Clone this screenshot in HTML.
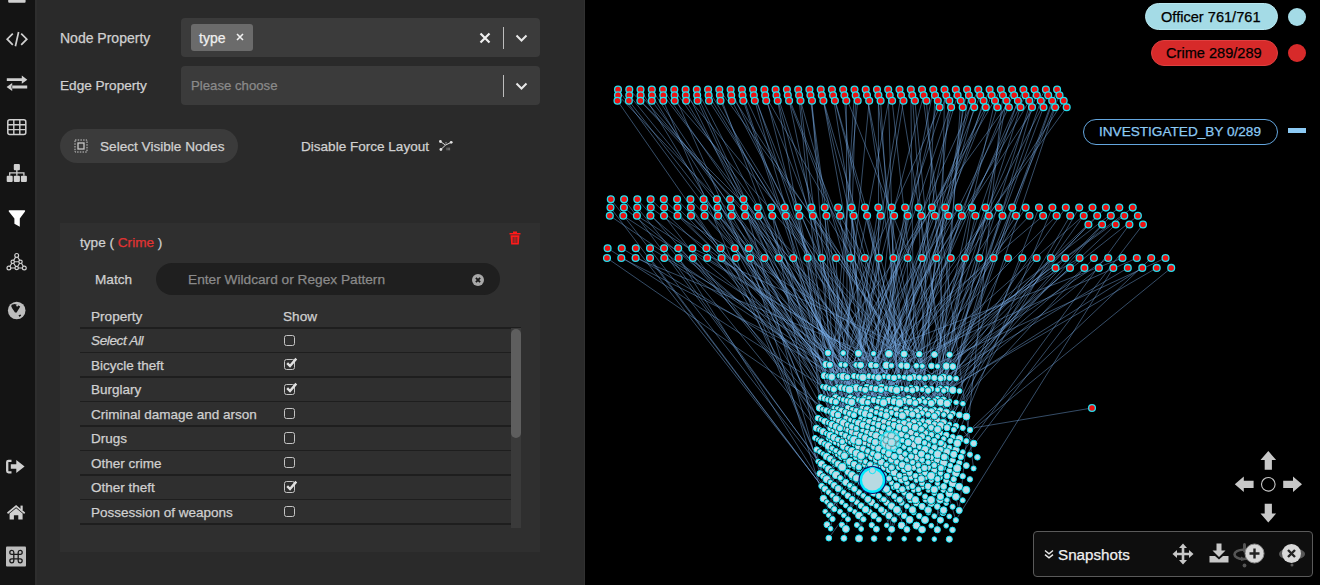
<!DOCTYPE html><html><head><meta charset="utf-8"><style>
*{box-sizing:border-box;margin:0;padding:0}
html,body{width:1320px;height:585px;overflow:hidden;background:#000;font-family:"Liberation Sans",sans-serif}
.a{position:absolute;white-space:nowrap;-webkit-text-stroke:0.25px currentColor}
#side{left:0;top:0;width:35px;height:585px;background:#141414}
#panel{left:35px;top:0;width:550px;height:585px;background:#2a2a2a}
#graph{left:585px;top:0;width:735px;height:585px;background:#000}
.lbl{color:#d0d0d0;font-size:14px}
.sel{background:#3b3b3b;border-radius:4px}
</style></head><body>
<div class="a" id="side"><svg class="a" style="left:0;top:0" width="35" height="585" viewBox="0 0 35 585"><rect x="8.2" y="-2" width="17.4" height="4.8" rx="1" fill="#d0d0d0"/><path d="M12.8 33.6 L7.2 39.2 L12.8 44.8 M21.2 33.6 L26.8 39.2 L21.2 44.8 M18.6 32 L15.4 46.2" stroke="#d0d0d0" stroke-width="1.7" fill="none"/><path d="M6.8 78.3 H22.5 V81.1 H6.8 Z M21.8 75.6 L27.3 79.7 L21.8 83.8 Z M11.5 85.6 H27.2 V88.4 H11.5 Z M12.2 82.9 L6.6 87 L12.2 91.1 Z" fill="#d0d0d0"/><rect x="7.8" y="119.7" width="18" height="14.9" rx="2" stroke="#d0d0d0" stroke-width="1.5" fill="none"/><path d="M13.8 119.7 V134.6 M19.8 119.7 V134.6 M7.8 124.7 H25.8 M7.8 129.6 H25.8" stroke="#d0d0d0" stroke-width="1.4"/><g fill="#d0d0d0"><rect x="13.8" y="164" width="6.1" height="6.2" rx="1"/><rect x="6.7" y="175.7" width="6" height="6.2" rx="1"/><rect x="13.8" y="175.7" width="6.1" height="6.2" rx="1"/><rect x="20.9" y="175.7" width="6" height="6.2" rx="1"/></g><path d="M16.85 170 V175.7 M9.7 175.7 V172.8 H23.9 V175.7" stroke="#d0d0d0" stroke-width="1.3" fill="none"/><path d="M9.2 210.3 H24.6 Q25.6 210.5 25 211.4 L19.8 218.5 V226.7 L14.4 223.8 V218.5 L8.8 211.4 Q8.3 210.5 9.2 210.3 Z" fill="#ffffff"/><path d="M16.7 255.4 L8.9 268 H24.3 Z M12.7 261.8 H20.5 L16.7 268 Z" stroke="#d0d0d0" stroke-width="1.1" fill="none"/><g fill="#141414" stroke="#d0d0d0" stroke-width="1.2"><circle cx="16.7" cy="255.4" r="1.9"/><circle cx="8.9" cy="268" r="1.9"/><circle cx="24.3" cy="268" r="1.9"/><circle cx="12.7" cy="261.8" r="1.7"/><circle cx="20.5" cy="261.8" r="1.7"/><circle cx="16.7" cy="268" r="1.7"/></g><circle cx="16.7" cy="310.5" r="8.8" fill="#bdbdbd"/><path d="M11.6 304.7 L14.7 304 L17.1 304.7 L20.2 306.4 L19.1 308.5 L17.8 310.5 L16.7 312.6 L15 312.6 L13.7 310.5 L12.3 308.5 L11.3 306.4 Z" fill="#141414"/><circle cx="17.2" cy="305.6" r="1" fill="#bdbdbd"/><path d="M18.5 315.3 L20.5 314.6 L21.2 315.6 L19.5 317 Z" fill="#141414"/><path d="M11.5 460.8 H8.5 Q7.2 460.8 7.2 462.1 V471 Q7.2 472.3 8.5 472.3 H11.5" stroke="#d0d0d0" stroke-width="2.3" fill="none"/><path d="M10.8 464.3 H16.3 V460 L24.6 466.5 L16.3 473 V468.8 H10.8 Z" fill="#d0d0d0"/><path d="M16.1 505 L7 512.6 L8 513.9 L16.1 507.3 L24.2 513.9 L25.2 512.6 Z" fill="#d0d0d0"/><path d="M9.6 513.4 L16.1 508.2 L22.6 513.4 V519.4 H18.3 V515.3 H13.9 V519.4 H9.6 Z" fill="#d0d0d0"/><rect x="20.5" y="505.6" width="2.2" height="4.5" fill="#d0d0d0"/><rect x="6" y="546.6" width="20" height="20" rx="1" fill="#bdbdbd"/><g transform="translate(9.2 549.8)"><path d="M4.6 4.6 V2.5 A2 2 0 1 0 2.5 4.6 H11.1 A2 2 0 1 0 9 2.5 V11.1 A2 2 0 1 0 11.1 9 H2.5 A2 2 0 1 0 4.6 11.1 Z" stroke="#1a1a1a" stroke-width="1.3" fill="none"/></g></svg></div>
<div class="a" id="panel"></div><div class="a" style="left:35px;top:0;width:2px;height:585px;background:#2e2e2e"></div><div class="a" style="left:584px;top:0;width:1px;height:585px;background:#313131"></div>
<div class="a" style="left:60px;top:31px;font-size:14px;line-height:14px;color:#d0d0d0;">Node Property</div>
<div class="a" style="left:60px;top:79px;font-size:13.6px;line-height:13.6px;color:#d0d0d0;">Edge Property</div>
<div class="a sel" style="left:181px;top:18px;width:359px;height:39px"></div>
<div class="a" style="left:191px;top:24px;width:62px;height:27px;background:#6b6b6b;border-radius:3px"></div>
<div class="a" style="left:199px;top:31px;font-size:14px;line-height:14px;color:#f0f0f0;">type</div>
<svg class="a" style="left:236px;top:33px" width="8" height="8" viewBox="0 0 8 8"><path d="M1 1 L7 7 M7 1 L1 7" stroke="#f0f0f0" stroke-width="1.6"/></svg>
<svg class="a" style="left:479px;top:32px" width="12" height="12" viewBox="0 0 12 12"><path d="M1.5 1.5 L10.5 10.5 M10.5 1.5 L1.5 10.5" stroke="#f0f0f0" stroke-width="2.2"/></svg>
<div class="a" style="left:503px;top:27px;width:1px;height:22px;background:#bdbdbd"></div>
<svg class="a" style="left:515px;top:34px" width="13" height="8" viewBox="0 0 13 8"><path d="M1.5 1.5 L6.5 6.5 L11.5 1.5" stroke="#e8e8e8" stroke-width="2" fill="none"/></svg>
<div class="a sel" style="left:181px;top:66px;width:359px;height:39px"></div>
<div class="a" style="left:191px;top:79px;font-size:13.2px;line-height:13.2px;color:#8a8a8a;">Please choose</div>
<div class="a" style="left:503px;top:75px;width:1px;height:22px;background:#bdbdbd"></div>
<svg class="a" style="left:515px;top:82px" width="13" height="8" viewBox="0 0 13 8"><path d="M1.5 1.5 L6.5 6.5 L11.5 1.5" stroke="#e8e8e8" stroke-width="2" fill="none"/></svg>
<div class="a" style="left:60px;top:129px;width:178px;height:34px;background:#3b3b3b;border-radius:17px"></div>
<svg class="a" style="left:74px;top:139px" width="14" height="14" viewBox="0 0 14 14"><rect x="1" y="1" width="12" height="12" stroke="#c8c8c8" stroke-width="1" stroke-dasharray="1.5 1.2" fill="none"/><rect x="4" y="4" width="6" height="6" stroke="#c8c8c8" stroke-width="1.3" fill="none"/></svg>
<div class="a" style="left:100px;top:140px;font-size:13.6px;line-height:13.6px;color:#d0d0d0;">Select Visible Nodes</div>
<div class="a" style="left:301px;top:140px;font-size:13.55px;line-height:13.55px;color:#d0d0d0;">Disable Force Layout</div>
<svg class="a" style="left:430px;top:130px" width="30" height="30" viewBox="430 130 30 30"><path d="M445.5 145.1 L440.4 141.5 M445.5 145.1 L451.2 142.3 M445.5 145.1 L440.9 149.5 M446 143.5 V142.3" stroke="#d8d8d8" stroke-width="1" fill="none"/><g fill="#e0e0e0"><circle cx="440.4" cy="141.5" r="1.4"/><circle cx="451.2" cy="142.3" r="1.4"/><circle cx="440.9" cy="149.5" r="1.4"/></g><path d="M447 147.6 V150.3 M448.3 147.6 V150.3 M449.6 147.6 V150.3" stroke="#888" stroke-width="0.8"/></svg>
<div class="a" style="left:60px;top:223px;width:480px;height:329px;background:#2f2f2f"></div>
<div class="a" style="left:80px;top:236px;font-size:13.6px;line-height:14px;color:#d0d0d0">type ( <span style="color:#e03333">Crime</span> )</div>
<svg class="a" style="left:509px;top:231px" width="12" height="14" viewBox="0 0 12 14"><path d="M0.5 2 H11.5 V3.5 H0.5 Z M4 0.5 H8 V2 H4 Z" fill="#ff1a1a"/><path d="M1.5 4.2 H10.5 L9.8 13.5 H2.2 Z" fill="#ff1a1a"/><path d="M4.2 6 V12 M6 6 V12 M7.8 6 V12" stroke="#2f2f2f" stroke-width="0.8"/></svg>
<div class="a" style="left:95px;top:273px;font-size:13.6px;line-height:13.6px;color:#d0d0d0;">Match</div>
<div class="a" style="left:156px;top:263px;width:344px;height:32px;background:#1f1f1f;border-radius:16px"></div>
<div class="a" style="left:188px;top:273px;font-size:13.7px;line-height:13.7px;color:#8a8a8a;">Enter Wildcard or Regex Pattern</div>
<svg class="a" style="left:472px;top:274px" width="12" height="12" viewBox="0 0 12 12"><circle cx="6" cy="6" r="6" fill="#a8a8a8"/><path d="M3.9 3.9 L8.1 8.1 M8.1 3.9 L3.9 8.1" stroke="#1a1a1a" stroke-width="1.9"/></svg>
<div class="a" style="left:91px;top:310px;font-size:13.6px;line-height:13.6px;color:#d0d0d0;">Property</div>
<div class="a" style="left:283px;top:310px;font-size:13.6px;line-height:13.6px;color:#d0d0d0;">Show</div>
<div class="a" style="left:80px;top:327.45px;width:441px;height:1.5px;background:#1e1e1e"></div>
<div class="a" style="left:91px;top:334.45px;font-size:13.5px;line-height:13.5px;color:#d0d0d0;letter-spacing:-0.35px"><i>Select All</i></div>
<div class="a" style="left:284px;top:334.65px;width:11.2px;height:11.4px;border:1.5px solid #c4c4c4;border-radius:2.5px"></div>
<div class="a" style="left:80px;top:351.90px;width:431px;height:1.5px;background:#1e1e1e"></div>
<div class="a" style="left:91px;top:358.9px;font-size:13.5px;line-height:13.5px;color:#d0d0d0;">Bicycle theft</div>
<div class="a" style="left:284px;top:359.10px;width:11.2px;height:11.4px;border:1.5px solid #c4c4c4;border-radius:2.5px"></div>
<svg class="a" style="left:284px;top:355.40px" width="14" height="14" viewBox="0 0 14 14"><path d="M3.2 8.2 L6 11 L12.3 3.6" stroke="#e0e0e0" stroke-width="2.4" fill="none"/></svg>
<div class="a" style="left:80px;top:376.35px;width:431px;height:1.5px;background:#1e1e1e"></div>
<div class="a" style="left:91px;top:383.34999999999997px;font-size:13.5px;line-height:13.5px;color:#d0d0d0;">Burglary</div>
<div class="a" style="left:284px;top:383.55px;width:11.2px;height:11.4px;border:1.5px solid #c4c4c4;border-radius:2.5px"></div>
<svg class="a" style="left:284px;top:379.85px" width="14" height="14" viewBox="0 0 14 14"><path d="M3.2 8.2 L6 11 L12.3 3.6" stroke="#e0e0e0" stroke-width="2.4" fill="none"/></svg>
<div class="a" style="left:80px;top:400.80px;width:431px;height:1.5px;background:#1e1e1e"></div>
<div class="a" style="left:91px;top:407.79999999999995px;font-size:13.5px;line-height:13.5px;color:#d0d0d0;">Criminal damage and arson</div>
<div class="a" style="left:284px;top:408.00px;width:11.2px;height:11.4px;border:1.5px solid #c4c4c4;border-radius:2.5px"></div>
<div class="a" style="left:80px;top:425.25px;width:431px;height:1.5px;background:#1e1e1e"></div>
<div class="a" style="left:91px;top:432.25px;font-size:13.5px;line-height:13.5px;color:#d0d0d0;">Drugs</div>
<div class="a" style="left:284px;top:432.45px;width:11.2px;height:11.4px;border:1.5px solid #c4c4c4;border-radius:2.5px"></div>
<div class="a" style="left:80px;top:449.70px;width:431px;height:1.5px;background:#1e1e1e"></div>
<div class="a" style="left:91px;top:456.7px;font-size:13.5px;line-height:13.5px;color:#d0d0d0;">Other crime</div>
<div class="a" style="left:284px;top:456.90px;width:11.2px;height:11.4px;border:1.5px solid #c4c4c4;border-radius:2.5px"></div>
<div class="a" style="left:80px;top:474.15px;width:431px;height:1.5px;background:#1e1e1e"></div>
<div class="a" style="left:91px;top:481.15px;font-size:13.5px;line-height:13.5px;color:#d0d0d0;">Other theft</div>
<div class="a" style="left:284px;top:481.35px;width:11.2px;height:11.4px;border:1.5px solid #c4c4c4;border-radius:2.5px"></div>
<svg class="a" style="left:284px;top:477.65px" width="14" height="14" viewBox="0 0 14 14"><path d="M3.2 8.2 L6 11 L12.3 3.6" stroke="#e0e0e0" stroke-width="2.4" fill="none"/></svg>
<div class="a" style="left:80px;top:498.60px;width:431px;height:1.5px;background:#1e1e1e"></div>
<div class="a" style="left:91px;top:505.6px;font-size:13.5px;line-height:13.5px;color:#d0d0d0;">Possession of weapons</div>
<div class="a" style="left:284px;top:505.80px;width:11.2px;height:11.4px;border:1.5px solid #c4c4c4;border-radius:2.5px"></div>
<div class="a" style="left:80px;top:523.05px;width:431px;height:1.5px;background:#1e1e1e"></div>
<div class="a" style="left:511px;top:328px;width:10px;height:200px;background:#3a3a3a"></div>
<div class="a" style="left:511px;top:329px;width:10px;height:109px;background:#5e5e5e;border-radius:5px"></div>
<div class="a" id="graph"></div>
<svg class="a" style="left:0;top:0" width="1320" height="585" viewBox="0 0 1320 585">
<path d="M618.0 89.5L898.9 467.3M629.3 89.5L953.8 429.7M640.5 89.5L906.9 529.4M651.8 89.5L896.4 454.9M663.0 89.5L931.2 475.9M674.3 89.5L946.9 476.1M685.6 89.5L863.2 448.7M696.8 89.5L852.2 387.0M708.1 89.5L913.7 422.3M719.3 89.5L922.2 366.1M730.6 89.5L925.6 499.7M741.9 89.5L937.3 506.6M753.1 89.5L854.3 398.9M764.4 89.5L854.1 439.8M775.6 89.5L909.6 496.3M786.9 89.5L867.2 476.8M798.2 89.5L832.3 440.0M809.4 89.5L845.3 388.6M820.7 89.5L905.8 452.8M831.9 89.5L955.8 520.2M843.2 89.5L952.8 366.5M854.5 89.5L832.2 471.9M865.7 89.5L940.5 473.1M877.0 89.5L904.1 354.0M888.2 89.5L898.9 467.3M899.5 89.5L952.7 413.5M910.8 89.5L914.8 429.3M922.0 89.5L973.6 468.4M933.3 89.5L843.9 538.3M944.5 89.5L937.3 529.7M955.8 89.5L838.0 439.6M967.1 89.5L905.8 430.9M978.3 89.5L818.1 439.8M989.6 89.5L828.6 492.2M1000.8 89.5L821.1 397.4M1012.1 89.5L863.2 448.7M1023.4 89.5L883.6 402.7M1034.6 89.5L925.6 432.9M1045.9 89.5L828.3 422.8M1057.1 89.5L904.2 515.9M618.0 95.2L888.9 377.1M629.3 95.2L893.9 420.5M640.6 95.2L928.5 422.5M652.0 95.2L854.4 421.6M663.3 95.2L905.8 409.0M674.6 95.2L852.6 498.9M685.9 95.2L973.7 443.4M697.2 95.2L869.4 467.0M708.6 95.2L934.3 465.2M719.9 95.2L835.8 402.0M731.2 95.2L949.5 424.3M742.5 95.2L856.3 428.5M753.8 95.2L886.8 429.0M765.2 95.2L956.0 426.1M776.5 95.2L876.3 459.4M787.8 95.2L906.8 389.4M799.1 95.2L913.7 512.4M810.4 95.2L851.7 402.2M821.8 95.2L937.2 487.2M833.1 95.2L891.6 467.5M844.4 95.2L871.8 525.1M855.7 95.2L844.7 449.9M867.0 95.2L916.4 434.6M878.4 95.2L878.8 496.0M889.7 95.2L828.3 422.8M901.0 95.2L830.6 528.7M912.3 95.2L931.5 365.9M923.6 95.2L841.4 410.7M935.0 95.2L918.3 416.0M946.3 95.2L841.4 410.7M957.6 95.2L860.7 418.6M968.9 95.2L891.7 529.3M980.2 95.2L825.0 489.0M991.6 95.2L842.3 467.0M1002.9 95.2L959.2 510.4M1014.2 95.2L827.9 352.9M1025.5 95.2L850.4 442.1M1036.8 95.2L863.3 495.8M1048.2 95.2L834.3 509.1M1059.5 95.2L894.0 486.8M617.5 100.8L889.1 492.8M628.9 100.8L940.1 499.8M640.4 100.8L906.8 365.9M651.8 100.8L915.4 451.6M663.3 100.8L818.2 461.5M674.7 100.8L940.6 402.2M686.1 100.8L925.6 499.7M697.6 100.8L860.9 459.2M709.0 100.8L959.2 486.7M720.5 100.8L881.2 462.0M731.9 100.8L888.9 400.4M743.3 100.8L861.1 455.9M754.8 100.8L862.9 474.1M766.2 100.8L905.1 453.9M777.7 100.8L838.0 439.6M789.1 100.8L915.3 427.4M800.5 100.8L841.5 433.7M812.0 100.8L835.9 442.0M823.4 100.8L871.4 365.1M834.9 100.8L934.4 474.9M846.3 100.8L847.5 424.8M857.7 100.8L829.9 388.4M869.2 100.8L830.5 505.5M880.6 100.8L906.9 529.4M892.1 100.8L925.1 402.0M903.5 100.8L856.4 387.9M914.9 100.8L949.4 470.5M926.4 100.8L950.4 416.4M937.8 100.8L858.6 423.2M949.3 100.8L912.5 509.9M960.7 100.8L934.3 489.6M972.1 100.8L865.5 461.8M983.6 100.8L850.0 509.3M995.0 100.8L915.4 451.6M1006.5 100.8L952.8 390.1M1017.9 100.8L884.2 489.7M1029.3 100.8L839.5 421.4M1040.8 100.8L889.2 538.7M1052.2 100.8L918.3 465.0M1063.7 100.8L848.4 430.2M939.6 107.2L827.9 352.9M951.1 107.2L881.2 462.0M962.7 107.2L931.4 434.8M974.2 107.2L869.4 489.5M985.8 107.2L828.1 399.6M997.4 107.2L865.6 509.5M1008.9 107.2L856.5 410.9M1020.5 107.2L886.7 525.3M1032.0 107.2L931.4 457.6M1043.5 107.2L946.4 366.1M1055.1 107.2L943.7 438.8M1066.7 107.2L845.4 412.1M610.8 199.2L834.2 485.3M624.1 199.2L839.9 489.2M637.3 199.2L850.4 442.1M650.6 199.2L896.4 432.5M663.8 199.2L876.2 412.5M677.1 199.2L826.1 364.4M690.4 199.2L925.6 455.2M703.6 199.2L894.1 401.6M716.9 199.2L874.0 492.7M730.1 199.2L891.7 529.3M743.4 199.2L819.9 473.6M610.5 207.6L821.6 486.0M623.9 207.6L845.3 388.6M637.3 207.6L861.0 482.5M650.7 207.6L931.4 411.9M664.1 207.6L959.5 391.0M677.5 207.6L886.2 415.6M690.8 207.6L838.0 439.6M704.2 207.6L928.5 445.1M717.6 207.6L896.9 509.8M731.0 207.6L879.4 442.5M744.4 207.6L934.3 516.2M757.8 207.6L901.5 480.0M771.2 207.6L841.6 456.5M784.6 207.6L946.9 476.1M798.0 207.6L916.4 365.7M811.4 207.6L937.5 413.3M824.7 207.6L837.8 454.2M838.1 207.6L891.7 529.3M851.5 207.6L870.2 464.5M864.9 207.6L920.1 474.7M878.3 207.6L836.1 486.2M891.7 207.6L862.9 474.1M905.1 207.6L861.2 529.0M918.5 207.6L928.5 467.6M931.9 207.6L878.5 401.4M945.2 207.6L863.2 448.7M958.6 207.6L858.4 353.4M972.0 207.6L925.6 499.7M985.4 207.6L934.5 354.5M998.8 207.6L856.5 433.8M1012.2 207.6L934.4 431.2M1025.6 207.6L872.8 450.2M1039.0 207.6L944.3 456.9M1052.4 207.6L937.4 483.3M1065.8 207.6L828.8 538.1M1079.2 207.6L921.4 478.8M1092.5 207.6L824.8 443.9M1105.9 207.6L854.2 464.3M1119.3 207.6L843.5 423.0M1132.7 207.6L826.5 433.5M609.8 215.7L913.7 422.3M623.3 215.7L869.1 376.3M636.9 215.7L876.0 365.5M650.4 215.7L928.8 450.9M664.0 215.7L881.9 499.2M677.5 215.7L873.8 400.2M691.0 215.7L918.3 465.0M704.6 215.7L943.7 486.5M718.1 215.7L937.6 454.3M731.7 215.7L867.1 454.5M745.2 215.7L908.4 420.7M758.7 215.7L875.2 467.3M772.3 215.7L828.7 515.2M785.8 215.7L839.6 444.0M799.4 215.7L861.2 529.0M812.9 215.7L931.2 403.3M826.4 215.7L950.4 416.4M840.0 215.7L952.7 413.5M853.5 215.7L914.8 429.3M867.1 215.7L940.4 520.1M880.6 215.7L819.9 473.6M894.1 215.7L881.2 485.8M907.7 215.7L848.4 430.2M921.2 215.7L850.3 420.0M934.8 215.7L840.1 453.1M948.3 215.7L828.7 515.2M961.8 215.7L878.7 448.8M975.4 215.7L921.4 454.1M988.9 215.7L906.9 483.0M1002.5 215.7L878.5 401.4M1016.0 215.7L830.5 505.5M1029.5 215.7L823.0 431.6M1043.1 215.7L854.2 376.1M1056.6 215.7L862.7 408.4M1070.2 215.7L896.9 509.8M1083.7 215.7L911.0 455.0M1097.2 215.7L928.5 377.1M1110.8 215.7L850.0 509.3M1124.3 215.7L849.6 413.6M1137.9 215.7L879.4 420.3M1088.4 224.5L843.7 492.4M1102.1 224.5L893.9 442.7M1115.7 224.5L899.5 427.2M1129.4 224.5L962.8 452.1M1143.0 224.5L946.3 480.5M607.6 248.2L913.7 444.9M621.7 248.2L937.4 436.7M635.8 248.2L847.9 519.2M650.0 248.2L925.6 410.5M664.1 248.2L838.2 488.6M678.2 248.2L824.4 375.7M692.3 248.2L919.3 354.2M706.4 248.2L894.2 472.6M720.6 248.2L946.2 503.2M734.7 248.2L865.1 486.5M748.8 248.2L836.1 474.9M607.0 258.0L830.0 412.0M621.3 258.0L920.1 409.1M635.6 258.0L959.5 391.0M650.0 258.0L821.6 486.0M664.3 258.0L940.9 443.0M678.6 258.0L825.0 489.0M692.9 258.0L862.9 474.1M707.2 258.0L894.0 377.8M721.6 258.0L839.7 466.6M735.9 258.0L818.2 461.5M750.2 258.0L823.4 498.6M764.5 258.0L898.9 467.3M778.8 258.0L900.8 450.6M793.2 258.0L894.2 496.2M807.5 258.0L819.6 407.9M821.8 258.0L926.1 439.3M836.1 258.0L845.7 482.4M850.4 258.0L902.3 464.9M864.8 258.0L879.3 398.1M879.1 258.0L854.0 415.2M893.4 258.0L959.2 510.4M907.7 258.0L901.6 525.4M922.0 258.0L827.0 524.7M936.4 258.0L909.6 425.5M950.7 258.0L828.3 422.8M965.0 258.0L934.3 465.2M979.3 258.0L931.4 388.9M993.6 258.0L835.9 426.4M1008.0 258.0L912.2 439.1M1022.3 258.0L949.5 424.3M1036.6 258.0L881.8 477.0M1050.9 258.0L874.9 440.5M1065.2 258.0L931.4 411.9M1079.6 258.0L831.9 400.8M1093.9 258.0L922.8 443.0M1108.2 258.0L816.6 449.6M1122.5 258.0L845.2 365.0M1136.8 258.0L845.3 388.6M1151.2 258.0L970.0 429.9M1165.5 258.0L837.6 409.4M1055.5 267.9L873.8 400.2M1070.0 267.9L906.8 412.9M1084.4 267.9L899.5 427.2M1098.9 267.9L872.8 450.2M1113.3 267.9L955.8 520.2M1127.8 267.9L925.6 388.0M1142.3 267.9L886.8 429.0M1156.7 267.9L893.9 420.5M1171.2 267.9L899.0 489.8M1092 408L967 429" stroke="#7cb0ec" stroke-opacity="0.62" stroke-width="0.7" fill="none"/>
<g fill="#ee1111" stroke="#22e0f0" stroke-width="1.3"><circle cx="618.0" cy="89.5" r="3.4"/><circle cx="629.3" cy="89.5" r="3.4"/><circle cx="640.5" cy="89.5" r="3.4"/><circle cx="651.8" cy="89.5" r="3.4"/><circle cx="663.0" cy="89.5" r="3.4"/><circle cx="674.3" cy="89.5" r="3.4"/><circle cx="685.6" cy="89.5" r="3.4"/><circle cx="696.8" cy="89.5" r="3.4"/><circle cx="708.1" cy="89.5" r="3.4"/><circle cx="719.3" cy="89.5" r="3.4"/><circle cx="730.6" cy="89.5" r="3.4"/><circle cx="741.9" cy="89.5" r="3.4"/><circle cx="753.1" cy="89.5" r="3.4"/><circle cx="764.4" cy="89.5" r="3.4"/><circle cx="775.6" cy="89.5" r="3.4"/><circle cx="786.9" cy="89.5" r="3.4"/><circle cx="798.2" cy="89.5" r="3.4"/><circle cx="809.4" cy="89.5" r="3.4"/><circle cx="820.7" cy="89.5" r="3.4"/><circle cx="831.9" cy="89.5" r="3.4"/><circle cx="843.2" cy="89.5" r="3.4"/><circle cx="854.5" cy="89.5" r="3.4"/><circle cx="865.7" cy="89.5" r="3.4"/><circle cx="877.0" cy="89.5" r="3.4"/><circle cx="888.2" cy="89.5" r="3.4"/><circle cx="899.5" cy="89.5" r="3.4"/><circle cx="910.8" cy="89.5" r="3.4"/><circle cx="922.0" cy="89.5" r="3.4"/><circle cx="933.3" cy="89.5" r="3.4"/><circle cx="944.5" cy="89.5" r="3.4"/><circle cx="955.8" cy="89.5" r="3.4"/><circle cx="967.1" cy="89.5" r="3.4"/><circle cx="978.3" cy="89.5" r="3.4"/><circle cx="989.6" cy="89.5" r="3.4"/><circle cx="1000.8" cy="89.5" r="3.4"/><circle cx="1012.1" cy="89.5" r="3.4"/><circle cx="1023.4" cy="89.5" r="3.4"/><circle cx="1034.6" cy="89.5" r="3.4"/><circle cx="1045.9" cy="89.5" r="3.4"/><circle cx="1057.1" cy="89.5" r="3.4"/><circle cx="618.0" cy="95.2" r="3.4"/><circle cx="629.3" cy="95.2" r="3.4"/><circle cx="640.6" cy="95.2" r="3.4"/><circle cx="652.0" cy="95.2" r="3.4"/><circle cx="663.3" cy="95.2" r="3.4"/><circle cx="674.6" cy="95.2" r="3.4"/><circle cx="685.9" cy="95.2" r="3.4"/><circle cx="697.2" cy="95.2" r="3.4"/><circle cx="708.6" cy="95.2" r="3.4"/><circle cx="719.9" cy="95.2" r="3.4"/><circle cx="731.2" cy="95.2" r="3.4"/><circle cx="742.5" cy="95.2" r="3.4"/><circle cx="753.8" cy="95.2" r="3.4"/><circle cx="765.2" cy="95.2" r="3.4"/><circle cx="776.5" cy="95.2" r="3.4"/><circle cx="787.8" cy="95.2" r="3.4"/><circle cx="799.1" cy="95.2" r="3.4"/><circle cx="810.4" cy="95.2" r="3.4"/><circle cx="821.8" cy="95.2" r="3.4"/><circle cx="833.1" cy="95.2" r="3.4"/><circle cx="844.4" cy="95.2" r="3.4"/><circle cx="855.7" cy="95.2" r="3.4"/><circle cx="867.0" cy="95.2" r="3.4"/><circle cx="878.4" cy="95.2" r="3.4"/><circle cx="889.7" cy="95.2" r="3.4"/><circle cx="901.0" cy="95.2" r="3.4"/><circle cx="912.3" cy="95.2" r="3.4"/><circle cx="923.6" cy="95.2" r="3.4"/><circle cx="935.0" cy="95.2" r="3.4"/><circle cx="946.3" cy="95.2" r="3.4"/><circle cx="957.6" cy="95.2" r="3.4"/><circle cx="968.9" cy="95.2" r="3.4"/><circle cx="980.2" cy="95.2" r="3.4"/><circle cx="991.6" cy="95.2" r="3.4"/><circle cx="1002.9" cy="95.2" r="3.4"/><circle cx="1014.2" cy="95.2" r="3.4"/><circle cx="1025.5" cy="95.2" r="3.4"/><circle cx="1036.8" cy="95.2" r="3.4"/><circle cx="1048.2" cy="95.2" r="3.4"/><circle cx="1059.5" cy="95.2" r="3.4"/><circle cx="617.5" cy="100.8" r="3.4"/><circle cx="628.9" cy="100.8" r="3.4"/><circle cx="640.4" cy="100.8" r="3.4"/><circle cx="651.8" cy="100.8" r="3.4"/><circle cx="663.3" cy="100.8" r="3.4"/><circle cx="674.7" cy="100.8" r="3.4"/><circle cx="686.1" cy="100.8" r="3.4"/><circle cx="697.6" cy="100.8" r="3.4"/><circle cx="709.0" cy="100.8" r="3.4"/><circle cx="720.5" cy="100.8" r="3.4"/><circle cx="731.9" cy="100.8" r="3.4"/><circle cx="743.3" cy="100.8" r="3.4"/><circle cx="754.8" cy="100.8" r="3.4"/><circle cx="766.2" cy="100.8" r="3.4"/><circle cx="777.7" cy="100.8" r="3.4"/><circle cx="789.1" cy="100.8" r="3.4"/><circle cx="800.5" cy="100.8" r="3.4"/><circle cx="812.0" cy="100.8" r="3.4"/><circle cx="823.4" cy="100.8" r="3.4"/><circle cx="834.9" cy="100.8" r="3.4"/><circle cx="846.3" cy="100.8" r="3.4"/><circle cx="857.7" cy="100.8" r="3.4"/><circle cx="869.2" cy="100.8" r="3.4"/><circle cx="880.6" cy="100.8" r="3.4"/><circle cx="892.1" cy="100.8" r="3.4"/><circle cx="903.5" cy="100.8" r="3.4"/><circle cx="914.9" cy="100.8" r="3.4"/><circle cx="926.4" cy="100.8" r="3.4"/><circle cx="937.8" cy="100.8" r="3.4"/><circle cx="949.3" cy="100.8" r="3.4"/><circle cx="960.7" cy="100.8" r="3.4"/><circle cx="972.1" cy="100.8" r="3.4"/><circle cx="983.6" cy="100.8" r="3.4"/><circle cx="995.0" cy="100.8" r="3.4"/><circle cx="1006.5" cy="100.8" r="3.4"/><circle cx="1017.9" cy="100.8" r="3.4"/><circle cx="1029.3" cy="100.8" r="3.4"/><circle cx="1040.8" cy="100.8" r="3.4"/><circle cx="1052.2" cy="100.8" r="3.4"/><circle cx="1063.7" cy="100.8" r="3.4"/><circle cx="939.6" cy="107.2" r="3.4"/><circle cx="951.1" cy="107.2" r="3.4"/><circle cx="962.7" cy="107.2" r="3.4"/><circle cx="974.2" cy="107.2" r="3.4"/><circle cx="985.8" cy="107.2" r="3.4"/><circle cx="997.4" cy="107.2" r="3.4"/><circle cx="1008.9" cy="107.2" r="3.4"/><circle cx="1020.5" cy="107.2" r="3.4"/><circle cx="1032.0" cy="107.2" r="3.4"/><circle cx="1043.5" cy="107.2" r="3.4"/><circle cx="1055.1" cy="107.2" r="3.4"/><circle cx="1066.7" cy="107.2" r="3.4"/><circle cx="610.8" cy="199.2" r="3.4"/><circle cx="624.1" cy="199.2" r="3.4"/><circle cx="637.3" cy="199.2" r="3.4"/><circle cx="650.6" cy="199.2" r="3.4"/><circle cx="663.8" cy="199.2" r="3.4"/><circle cx="677.1" cy="199.2" r="3.4"/><circle cx="690.4" cy="199.2" r="3.4"/><circle cx="703.6" cy="199.2" r="3.4"/><circle cx="716.9" cy="199.2" r="3.4"/><circle cx="730.1" cy="199.2" r="3.4"/><circle cx="743.4" cy="199.2" r="3.4"/><circle cx="610.5" cy="207.6" r="3.4"/><circle cx="623.9" cy="207.6" r="3.4"/><circle cx="637.3" cy="207.6" r="3.4"/><circle cx="650.7" cy="207.6" r="3.4"/><circle cx="664.1" cy="207.6" r="3.4"/><circle cx="677.5" cy="207.6" r="3.4"/><circle cx="690.8" cy="207.6" r="3.4"/><circle cx="704.2" cy="207.6" r="3.4"/><circle cx="717.6" cy="207.6" r="3.4"/><circle cx="731.0" cy="207.6" r="3.4"/><circle cx="744.4" cy="207.6" r="3.4"/><circle cx="757.8" cy="207.6" r="3.4"/><circle cx="771.2" cy="207.6" r="3.4"/><circle cx="784.6" cy="207.6" r="3.4"/><circle cx="798.0" cy="207.6" r="3.4"/><circle cx="811.4" cy="207.6" r="3.4"/><circle cx="824.7" cy="207.6" r="3.4"/><circle cx="838.1" cy="207.6" r="3.4"/><circle cx="851.5" cy="207.6" r="3.4"/><circle cx="864.9" cy="207.6" r="3.4"/><circle cx="878.3" cy="207.6" r="3.4"/><circle cx="891.7" cy="207.6" r="3.4"/><circle cx="905.1" cy="207.6" r="3.4"/><circle cx="918.5" cy="207.6" r="3.4"/><circle cx="931.9" cy="207.6" r="3.4"/><circle cx="945.2" cy="207.6" r="3.4"/><circle cx="958.6" cy="207.6" r="3.4"/><circle cx="972.0" cy="207.6" r="3.4"/><circle cx="985.4" cy="207.6" r="3.4"/><circle cx="998.8" cy="207.6" r="3.4"/><circle cx="1012.2" cy="207.6" r="3.4"/><circle cx="1025.6" cy="207.6" r="3.4"/><circle cx="1039.0" cy="207.6" r="3.4"/><circle cx="1052.4" cy="207.6" r="3.4"/><circle cx="1065.8" cy="207.6" r="3.4"/><circle cx="1079.2" cy="207.6" r="3.4"/><circle cx="1092.5" cy="207.6" r="3.4"/><circle cx="1105.9" cy="207.6" r="3.4"/><circle cx="1119.3" cy="207.6" r="3.4"/><circle cx="1132.7" cy="207.6" r="3.4"/><circle cx="609.8" cy="215.7" r="3.4"/><circle cx="623.3" cy="215.7" r="3.4"/><circle cx="636.9" cy="215.7" r="3.4"/><circle cx="650.4" cy="215.7" r="3.4"/><circle cx="664.0" cy="215.7" r="3.4"/><circle cx="677.5" cy="215.7" r="3.4"/><circle cx="691.0" cy="215.7" r="3.4"/><circle cx="704.6" cy="215.7" r="3.4"/><circle cx="718.1" cy="215.7" r="3.4"/><circle cx="731.7" cy="215.7" r="3.4"/><circle cx="745.2" cy="215.7" r="3.4"/><circle cx="758.7" cy="215.7" r="3.4"/><circle cx="772.3" cy="215.7" r="3.4"/><circle cx="785.8" cy="215.7" r="3.4"/><circle cx="799.4" cy="215.7" r="3.4"/><circle cx="812.9" cy="215.7" r="3.4"/><circle cx="826.4" cy="215.7" r="3.4"/><circle cx="840.0" cy="215.7" r="3.4"/><circle cx="853.5" cy="215.7" r="3.4"/><circle cx="867.1" cy="215.7" r="3.4"/><circle cx="880.6" cy="215.7" r="3.4"/><circle cx="894.1" cy="215.7" r="3.4"/><circle cx="907.7" cy="215.7" r="3.4"/><circle cx="921.2" cy="215.7" r="3.4"/><circle cx="934.8" cy="215.7" r="3.4"/><circle cx="948.3" cy="215.7" r="3.4"/><circle cx="961.8" cy="215.7" r="3.4"/><circle cx="975.4" cy="215.7" r="3.4"/><circle cx="988.9" cy="215.7" r="3.4"/><circle cx="1002.5" cy="215.7" r="3.4"/><circle cx="1016.0" cy="215.7" r="3.4"/><circle cx="1029.5" cy="215.7" r="3.4"/><circle cx="1043.1" cy="215.7" r="3.4"/><circle cx="1056.6" cy="215.7" r="3.4"/><circle cx="1070.2" cy="215.7" r="3.4"/><circle cx="1083.7" cy="215.7" r="3.4"/><circle cx="1097.2" cy="215.7" r="3.4"/><circle cx="1110.8" cy="215.7" r="3.4"/><circle cx="1124.3" cy="215.7" r="3.4"/><circle cx="1137.9" cy="215.7" r="3.4"/><circle cx="1088.4" cy="224.5" r="3.4"/><circle cx="1102.1" cy="224.5" r="3.4"/><circle cx="1115.7" cy="224.5" r="3.4"/><circle cx="1129.4" cy="224.5" r="3.4"/><circle cx="1143.0" cy="224.5" r="3.4"/><circle cx="607.6" cy="248.2" r="3.4"/><circle cx="621.7" cy="248.2" r="3.4"/><circle cx="635.8" cy="248.2" r="3.4"/><circle cx="650.0" cy="248.2" r="3.4"/><circle cx="664.1" cy="248.2" r="3.4"/><circle cx="678.2" cy="248.2" r="3.4"/><circle cx="692.3" cy="248.2" r="3.4"/><circle cx="706.4" cy="248.2" r="3.4"/><circle cx="720.6" cy="248.2" r="3.4"/><circle cx="734.7" cy="248.2" r="3.4"/><circle cx="748.8" cy="248.2" r="3.4"/><circle cx="607.0" cy="258.0" r="3.4"/><circle cx="621.3" cy="258.0" r="3.4"/><circle cx="635.6" cy="258.0" r="3.4"/><circle cx="650.0" cy="258.0" r="3.4"/><circle cx="664.3" cy="258.0" r="3.4"/><circle cx="678.6" cy="258.0" r="3.4"/><circle cx="692.9" cy="258.0" r="3.4"/><circle cx="707.2" cy="258.0" r="3.4"/><circle cx="721.6" cy="258.0" r="3.4"/><circle cx="735.9" cy="258.0" r="3.4"/><circle cx="750.2" cy="258.0" r="3.4"/><circle cx="764.5" cy="258.0" r="3.4"/><circle cx="778.8" cy="258.0" r="3.4"/><circle cx="793.2" cy="258.0" r="3.4"/><circle cx="807.5" cy="258.0" r="3.4"/><circle cx="821.8" cy="258.0" r="3.4"/><circle cx="836.1" cy="258.0" r="3.4"/><circle cx="850.4" cy="258.0" r="3.4"/><circle cx="864.8" cy="258.0" r="3.4"/><circle cx="879.1" cy="258.0" r="3.4"/><circle cx="893.4" cy="258.0" r="3.4"/><circle cx="907.7" cy="258.0" r="3.4"/><circle cx="922.0" cy="258.0" r="3.4"/><circle cx="936.4" cy="258.0" r="3.4"/><circle cx="950.7" cy="258.0" r="3.4"/><circle cx="965.0" cy="258.0" r="3.4"/><circle cx="979.3" cy="258.0" r="3.4"/><circle cx="993.6" cy="258.0" r="3.4"/><circle cx="1008.0" cy="258.0" r="3.4"/><circle cx="1022.3" cy="258.0" r="3.4"/><circle cx="1036.6" cy="258.0" r="3.4"/><circle cx="1050.9" cy="258.0" r="3.4"/><circle cx="1065.2" cy="258.0" r="3.4"/><circle cx="1079.6" cy="258.0" r="3.4"/><circle cx="1093.9" cy="258.0" r="3.4"/><circle cx="1108.2" cy="258.0" r="3.4"/><circle cx="1122.5" cy="258.0" r="3.4"/><circle cx="1136.8" cy="258.0" r="3.4"/><circle cx="1151.2" cy="258.0" r="3.4"/><circle cx="1165.5" cy="258.0" r="3.4"/><circle cx="1055.5" cy="267.9" r="3.4"/><circle cx="1070.0" cy="267.9" r="3.4"/><circle cx="1084.4" cy="267.9" r="3.4"/><circle cx="1098.9" cy="267.9" r="3.4"/><circle cx="1113.3" cy="267.9" r="3.4"/><circle cx="1127.8" cy="267.9" r="3.4"/><circle cx="1142.3" cy="267.9" r="3.4"/><circle cx="1156.7" cy="267.9" r="3.4"/><circle cx="1171.2" cy="267.9" r="3.4"/><circle cx="1092.0" cy="408.0" r="3.4"/></g>
<g fill="#c0dce8" stroke="#10eefc" stroke-width="1.0"><circle cx="926.1" cy="439.3" r="3.80" fill="#020810" stroke="none"/><circle cx="926.1" cy="439.3" r="3.00"/><circle cx="912.2" cy="439.1" r="2.93" fill="#020810" stroke="none"/><circle cx="912.2" cy="439.1" r="2.13"/><circle cx="898.4" cy="438.9" r="3.66" fill="#020810" stroke="none"/><circle cx="898.4" cy="438.9" r="2.86"/><circle cx="884.5" cy="438.8" r="2.91" fill="#020810" stroke="none"/><circle cx="884.5" cy="438.8" r="2.11"/><circle cx="870.6" cy="438.6" r="3.44" fill="#020810" stroke="none"/><circle cx="870.6" cy="438.6" r="2.64"/><circle cx="856.7" cy="438.4" r="3.28" fill="#020810" stroke="none"/><circle cx="856.7" cy="438.4" r="2.48"/><circle cx="842.8" cy="438.3" r="3.03" fill="#020810" stroke="none"/><circle cx="842.8" cy="438.3" r="2.23"/><circle cx="828.9" cy="438.1" r="3.58" fill="#020810" stroke="none"/><circle cx="828.9" cy="438.1" r="2.78"/><circle cx="815.0" cy="437.9" r="3.30" fill="#020810" stroke="none"/><circle cx="815.0" cy="437.9" r="2.50"/><circle cx="928.8" cy="450.9" r="3.48" fill="#020810" stroke="none"/><circle cx="928.8" cy="450.9" r="2.68"/><circle cx="914.8" cy="450.7" r="3.98" fill="#020810" stroke="none"/><circle cx="914.8" cy="450.7" r="3.18"/><circle cx="900.8" cy="450.6" r="3.06" fill="#020810" stroke="none"/><circle cx="900.8" cy="450.6" r="2.26"/><circle cx="886.8" cy="450.4" r="2.93" fill="#020810" stroke="none"/><circle cx="886.8" cy="450.4" r="2.13"/><circle cx="928.8" cy="429.5" r="3.11" fill="#020810" stroke="none"/><circle cx="928.8" cy="429.5" r="2.31"/><circle cx="872.8" cy="450.2" r="3.58" fill="#020810" stroke="none"/><circle cx="872.8" cy="450.2" r="2.78"/><circle cx="914.8" cy="429.3" r="3.02" fill="#020810" stroke="none"/><circle cx="914.8" cy="429.3" r="2.22"/><circle cx="858.8" cy="450.1" r="3.00" fill="#020810" stroke="none"/><circle cx="858.8" cy="450.1" r="2.20"/><circle cx="900.8" cy="429.2" r="3.96" fill="#020810" stroke="none"/><circle cx="900.8" cy="429.2" r="3.16"/><circle cx="844.7" cy="449.9" r="3.55" fill="#020810" stroke="none"/><circle cx="844.7" cy="449.9" r="2.75"/><circle cx="886.8" cy="429.0" r="3.26" fill="#020810" stroke="none"/><circle cx="886.8" cy="429.0" r="2.46"/><circle cx="830.7" cy="449.8" r="3.94" fill="#020810" stroke="none"/><circle cx="830.7" cy="449.8" r="3.14"/><circle cx="872.7" cy="428.8" r="3.13" fill="#020810" stroke="none"/><circle cx="872.7" cy="428.8" r="2.33"/><circle cx="816.6" cy="449.6" r="3.56" fill="#020810" stroke="none"/><circle cx="816.6" cy="449.6" r="2.76"/><circle cx="858.7" cy="428.6" r="3.02" fill="#020810" stroke="none"/><circle cx="858.7" cy="428.6" r="2.22"/><circle cx="844.6" cy="428.5" r="3.25" fill="#020810" stroke="none"/><circle cx="844.6" cy="428.5" r="2.45"/><circle cx="830.6" cy="428.3" r="3.79" fill="#020810" stroke="none"/><circle cx="830.6" cy="428.3" r="2.99"/><circle cx="816.5" cy="428.1" r="3.98" fill="#020810" stroke="none"/><circle cx="816.5" cy="428.1" r="3.18"/><circle cx="931.6" cy="462.8" r="3.94" fill="#020810" stroke="none"/><circle cx="931.6" cy="462.8" r="3.14"/><circle cx="917.4" cy="462.6" r="3.21" fill="#020810" stroke="none"/><circle cx="917.4" cy="462.6" r="2.41"/><circle cx="903.3" cy="462.4" r="3.46" fill="#020810" stroke="none"/><circle cx="903.3" cy="462.4" r="2.66"/><circle cx="889.1" cy="462.3" r="3.14" fill="#020810" stroke="none"/><circle cx="889.1" cy="462.3" r="2.34"/><circle cx="931.6" cy="441.2" r="3.00" fill="#020810" stroke="none"/><circle cx="931.6" cy="441.2" r="2.20"/><circle cx="875.0" cy="462.1" r="3.35" fill="#020810" stroke="none"/><circle cx="875.0" cy="462.1" r="2.55"/><circle cx="917.4" cy="441.0" r="3.87" fill="#020810" stroke="none"/><circle cx="917.4" cy="441.0" r="3.07"/><circle cx="860.8" cy="462.0" r="3.89" fill="#020810" stroke="none"/><circle cx="860.8" cy="462.0" r="3.09"/><circle cx="903.3" cy="440.8" r="3.66" fill="#020810" stroke="none"/><circle cx="903.3" cy="440.8" r="2.86"/><circle cx="846.6" cy="461.8" r="4.07" fill="#020810" stroke="none"/><circle cx="846.6" cy="461.8" r="3.27"/><circle cx="889.1" cy="440.7" r="3.11" fill="#020810" stroke="none"/><circle cx="889.1" cy="440.7" r="2.31"/><circle cx="931.6" cy="419.5" r="3.02" fill="#020810" stroke="none"/><circle cx="931.6" cy="419.5" r="2.22"/><circle cx="832.4" cy="461.6" r="3.29" fill="#020810" stroke="none"/><circle cx="832.4" cy="461.6" r="2.49"/><circle cx="874.9" cy="440.5" r="3.11" fill="#020810" stroke="none"/><circle cx="874.9" cy="440.5" r="2.31"/><circle cx="917.4" cy="419.4" r="3.06" fill="#020810" stroke="none"/><circle cx="917.4" cy="419.4" r="2.26"/><circle cx="818.2" cy="461.5" r="3.25" fill="#020810" stroke="none"/><circle cx="818.2" cy="461.5" r="2.45"/><circle cx="860.7" cy="440.3" r="3.53" fill="#020810" stroke="none"/><circle cx="860.7" cy="440.3" r="2.73"/><circle cx="903.3" cy="419.2" r="3.35" fill="#020810" stroke="none"/><circle cx="903.3" cy="419.2" r="2.55"/><circle cx="846.5" cy="440.2" r="3.15" fill="#020810" stroke="none"/><circle cx="846.5" cy="440.2" r="2.35"/><circle cx="889.1" cy="419.0" r="3.88" fill="#020810" stroke="none"/><circle cx="889.1" cy="419.0" r="3.08"/><circle cx="832.3" cy="440.0" r="4.14" fill="#020810" stroke="none"/><circle cx="832.3" cy="440.0" r="3.34"/><circle cx="874.9" cy="418.8" r="3.30" fill="#020810" stroke="none"/><circle cx="874.9" cy="418.8" r="2.50"/><circle cx="818.1" cy="439.8" r="2.98" fill="#020810" stroke="none"/><circle cx="818.1" cy="439.8" r="2.18"/><circle cx="860.7" cy="418.6" r="2.96" fill="#020810" stroke="none"/><circle cx="860.7" cy="418.6" r="2.16"/><circle cx="846.5" cy="418.5" r="3.94" fill="#020810" stroke="none"/><circle cx="846.5" cy="418.5" r="3.14"/><circle cx="832.2" cy="418.3" r="2.97" fill="#020810" stroke="none"/><circle cx="832.2" cy="418.3" r="2.17"/><circle cx="818.0" cy="418.1" r="3.66" fill="#020810" stroke="none"/><circle cx="818.0" cy="418.1" r="2.86"/><circle cx="934.4" cy="474.9" r="3.47" fill="#020810" stroke="none"/><circle cx="934.4" cy="474.9" r="2.67"/><circle cx="920.1" cy="474.7" r="3.16" fill="#020810" stroke="none"/><circle cx="920.1" cy="474.7" r="2.36"/><circle cx="905.8" cy="474.6" r="3.82" fill="#020810" stroke="none"/><circle cx="905.8" cy="474.6" r="3.02"/><circle cx="891.5" cy="474.4" r="2.97" fill="#020810" stroke="none"/><circle cx="891.5" cy="474.4" r="2.17"/><circle cx="934.4" cy="453.1" r="3.02" fill="#020810" stroke="none"/><circle cx="934.4" cy="453.1" r="2.22"/><circle cx="877.2" cy="474.2" r="3.32" fill="#020810" stroke="none"/><circle cx="877.2" cy="474.2" r="2.52"/><circle cx="920.1" cy="452.9" r="2.98" fill="#020810" stroke="none"/><circle cx="920.1" cy="452.9" r="2.18"/><circle cx="862.9" cy="474.1" r="3.89" fill="#020810" stroke="none"/><circle cx="862.9" cy="474.1" r="3.09"/><circle cx="905.8" cy="452.8" r="3.10" fill="#020810" stroke="none"/><circle cx="905.8" cy="452.8" r="2.30"/><circle cx="848.6" cy="473.9" r="3.03" fill="#020810" stroke="none"/><circle cx="848.6" cy="473.9" r="2.23"/><circle cx="891.5" cy="452.6" r="2.98" fill="#020810" stroke="none"/><circle cx="891.5" cy="452.6" r="2.18"/><circle cx="934.4" cy="431.2" r="3.56" fill="#020810" stroke="none"/><circle cx="934.4" cy="431.2" r="2.76"/><circle cx="834.3" cy="473.8" r="3.31" fill="#020810" stroke="none"/><circle cx="834.3" cy="473.8" r="2.51"/><circle cx="877.2" cy="452.4" r="3.56" fill="#020810" stroke="none"/><circle cx="877.2" cy="452.4" r="2.76"/><circle cx="920.1" cy="431.1" r="3.60" fill="#020810" stroke="none"/><circle cx="920.1" cy="431.1" r="2.80"/><circle cx="819.9" cy="473.6" r="3.85" fill="#020810" stroke="none"/><circle cx="819.9" cy="473.6" r="3.05"/><circle cx="862.9" cy="452.3" r="4.13" fill="#020810" stroke="none"/><circle cx="862.9" cy="452.3" r="3.33"/><circle cx="905.8" cy="430.9" r="3.65" fill="#020810" stroke="none"/><circle cx="905.8" cy="430.9" r="2.85"/><circle cx="848.5" cy="452.1" r="3.07" fill="#020810" stroke="none"/><circle cx="848.5" cy="452.1" r="2.27"/><circle cx="891.5" cy="430.7" r="3.35" fill="#020810" stroke="none"/><circle cx="891.5" cy="430.7" r="2.55"/><circle cx="934.4" cy="409.3" r="3.06" fill="#020810" stroke="none"/><circle cx="934.4" cy="409.3" r="2.26"/><circle cx="834.2" cy="451.9" r="2.98" fill="#020810" stroke="none"/><circle cx="834.2" cy="451.9" r="2.18"/><circle cx="877.1" cy="430.5" r="3.35" fill="#020810" stroke="none"/><circle cx="877.1" cy="430.5" r="2.55"/><circle cx="920.1" cy="409.1" r="3.70" fill="#020810" stroke="none"/><circle cx="920.1" cy="409.1" r="2.90"/><circle cx="819.8" cy="451.8" r="3.06" fill="#020810" stroke="none"/><circle cx="819.8" cy="451.8" r="2.26"/><circle cx="862.8" cy="430.4" r="3.13" fill="#020810" stroke="none"/><circle cx="862.8" cy="430.4" r="2.33"/><circle cx="905.8" cy="409.0" r="3.20" fill="#020810" stroke="none"/><circle cx="905.8" cy="409.0" r="2.40"/><circle cx="848.4" cy="430.2" r="3.67" fill="#020810" stroke="none"/><circle cx="848.4" cy="430.2" r="2.87"/><circle cx="891.4" cy="408.8" r="3.41" fill="#020810" stroke="none"/><circle cx="891.4" cy="408.8" r="2.61"/><circle cx="834.1" cy="430.0" r="3.55" fill="#020810" stroke="none"/><circle cx="834.1" cy="430.0" r="2.75"/><circle cx="877.1" cy="408.6" r="3.77" fill="#020810" stroke="none"/><circle cx="877.1" cy="408.6" r="2.97"/><circle cx="819.7" cy="429.8" r="3.26" fill="#020810" stroke="none"/><circle cx="819.7" cy="429.8" r="2.46"/><circle cx="862.7" cy="408.4" r="3.83" fill="#020810" stroke="none"/><circle cx="862.7" cy="408.4" r="3.03"/><circle cx="848.3" cy="408.2" r="4.04" fill="#020810" stroke="none"/><circle cx="848.3" cy="408.2" r="3.24"/><circle cx="834.0" cy="408.0" r="3.01" fill="#020810" stroke="none"/><circle cx="834.0" cy="408.0" r="2.21"/><circle cx="819.6" cy="407.9" r="4.09" fill="#020810" stroke="none"/><circle cx="819.6" cy="407.9" r="3.29"/><circle cx="937.2" cy="487.2" r="3.73" fill="#020810" stroke="none"/><circle cx="937.2" cy="487.2" r="2.93"/><circle cx="922.8" cy="487.1" r="3.04" fill="#020810" stroke="none"/><circle cx="922.8" cy="487.1" r="2.24"/><circle cx="908.4" cy="486.9" r="3.34" fill="#020810" stroke="none"/><circle cx="908.4" cy="486.9" r="2.54"/><circle cx="894.0" cy="486.8" r="3.58" fill="#020810" stroke="none"/><circle cx="894.0" cy="486.8" r="2.78"/><circle cx="937.2" cy="465.2" r="4.06" fill="#020810" stroke="none"/><circle cx="937.2" cy="465.2" r="3.26"/><circle cx="879.5" cy="486.6" r="3.26" fill="#020810" stroke="none"/><circle cx="879.5" cy="486.6" r="2.46"/><circle cx="922.8" cy="465.1" r="3.50" fill="#020810" stroke="none"/><circle cx="922.8" cy="465.1" r="2.70"/><circle cx="865.1" cy="486.5" r="4.01" fill="#020810" stroke="none"/><circle cx="865.1" cy="486.5" r="3.21"/><circle cx="908.4" cy="464.9" r="3.86" fill="#020810" stroke="none"/><circle cx="908.4" cy="464.9" r="3.06"/><circle cx="850.6" cy="486.3" r="4.13" fill="#020810" stroke="none"/><circle cx="850.6" cy="486.3" r="3.33"/><circle cx="893.9" cy="464.7" r="3.36" fill="#020810" stroke="none"/><circle cx="893.9" cy="464.7" r="2.56"/><circle cx="937.3" cy="443.2" r="3.62" fill="#020810" stroke="none"/><circle cx="937.3" cy="443.2" r="2.82"/><circle cx="836.1" cy="486.2" r="3.10" fill="#020810" stroke="none"/><circle cx="836.1" cy="486.2" r="2.30"/><circle cx="879.5" cy="464.6" r="3.74" fill="#020810" stroke="none"/><circle cx="879.5" cy="464.6" r="2.94"/><circle cx="922.8" cy="443.0" r="3.90" fill="#020810" stroke="none"/><circle cx="922.8" cy="443.0" r="3.10"/><circle cx="821.6" cy="486.0" r="3.61" fill="#020810" stroke="none"/><circle cx="821.6" cy="486.0" r="2.81"/><circle cx="865.0" cy="464.4" r="3.73" fill="#020810" stroke="none"/><circle cx="865.0" cy="464.4" r="2.93"/><circle cx="908.4" cy="442.8" r="3.10" fill="#020810" stroke="none"/><circle cx="908.4" cy="442.8" r="2.30"/><circle cx="850.5" cy="464.3" r="4.05" fill="#020810" stroke="none"/><circle cx="850.5" cy="464.3" r="3.25"/><circle cx="893.9" cy="442.7" r="4.20" fill="#020810" stroke="none"/><circle cx="893.9" cy="442.7" r="3.40"/><circle cx="937.3" cy="421.1" r="4.20" fill="#020810" stroke="none"/><circle cx="937.3" cy="421.1" r="3.40"/><circle cx="836.0" cy="464.1" r="3.46" fill="#020810" stroke="none"/><circle cx="836.0" cy="464.1" r="2.66"/><circle cx="879.4" cy="442.5" r="3.86" fill="#020810" stroke="none"/><circle cx="879.4" cy="442.5" r="3.06"/><circle cx="922.8" cy="420.9" r="3.20" fill="#020810" stroke="none"/><circle cx="922.8" cy="420.9" r="2.40"/><circle cx="821.5" cy="463.9" r="4.07" fill="#020810" stroke="none"/><circle cx="821.5" cy="463.9" r="3.27"/><circle cx="864.9" cy="442.3" r="3.97" fill="#020810" stroke="none"/><circle cx="864.9" cy="442.3" r="3.17"/><circle cx="908.4" cy="420.7" r="3.23" fill="#020810" stroke="none"/><circle cx="908.4" cy="420.7" r="2.43"/><circle cx="850.4" cy="442.1" r="3.03" fill="#020810" stroke="none"/><circle cx="850.4" cy="442.1" r="2.23"/><circle cx="893.9" cy="420.5" r="3.34" fill="#020810" stroke="none"/><circle cx="893.9" cy="420.5" r="2.54"/><circle cx="937.3" cy="398.9" r="3.48" fill="#020810" stroke="none"/><circle cx="937.3" cy="398.9" r="2.68"/><circle cx="835.9" cy="442.0" r="3.82" fill="#020810" stroke="none"/><circle cx="835.9" cy="442.0" r="3.02"/><circle cx="879.4" cy="420.3" r="3.40" fill="#020810" stroke="none"/><circle cx="879.4" cy="420.3" r="2.60"/><circle cx="922.8" cy="398.7" r="3.01" fill="#020810" stroke="none"/><circle cx="922.8" cy="398.7" r="2.21"/><circle cx="821.4" cy="441.8" r="3.89" fill="#020810" stroke="none"/><circle cx="821.4" cy="441.8" r="3.09"/><circle cx="864.9" cy="420.2" r="3.02" fill="#020810" stroke="none"/><circle cx="864.9" cy="420.2" r="2.22"/><circle cx="908.4" cy="398.5" r="3.88" fill="#020810" stroke="none"/><circle cx="908.4" cy="398.5" r="3.08"/><circle cx="850.3" cy="420.0" r="3.08" fill="#020810" stroke="none"/><circle cx="850.3" cy="420.0" r="2.28"/><circle cx="893.8" cy="398.3" r="3.22" fill="#020810" stroke="none"/><circle cx="893.8" cy="398.3" r="2.42"/><circle cx="835.8" cy="419.8" r="3.86" fill="#020810" stroke="none"/><circle cx="835.8" cy="419.8" r="3.06"/><circle cx="879.3" cy="398.1" r="3.06" fill="#020810" stroke="none"/><circle cx="879.3" cy="398.1" r="2.26"/><circle cx="821.3" cy="419.6" r="3.07" fill="#020810" stroke="none"/><circle cx="821.3" cy="419.6" r="2.27"/><circle cx="864.8" cy="398.0" r="3.44" fill="#020810" stroke="none"/><circle cx="864.8" cy="398.0" r="2.64"/><circle cx="850.3" cy="397.8" r="3.75" fill="#020810" stroke="none"/><circle cx="850.3" cy="397.8" r="2.95"/><circle cx="835.7" cy="397.6" r="3.95" fill="#020810" stroke="none"/><circle cx="835.7" cy="397.6" r="3.15"/><circle cx="821.1" cy="397.4" r="3.70" fill="#020810" stroke="none"/><circle cx="821.1" cy="397.4" r="2.90"/><circle cx="940.1" cy="499.8" r="4.16" fill="#020810" stroke="none"/><circle cx="940.1" cy="499.8" r="3.36"/><circle cx="925.6" cy="499.7" r="3.42" fill="#020810" stroke="none"/><circle cx="925.6" cy="499.7" r="2.62"/><circle cx="911.0" cy="499.5" r="4.17" fill="#020810" stroke="none"/><circle cx="911.0" cy="499.5" r="3.37"/><circle cx="896.4" cy="499.4" r="3.04" fill="#020810" stroke="none"/><circle cx="896.4" cy="499.4" r="2.24"/><circle cx="940.2" cy="477.6" r="3.13" fill="#020810" stroke="none"/><circle cx="940.2" cy="477.6" r="2.33"/><circle cx="881.9" cy="499.2" r="3.47" fill="#020810" stroke="none"/><circle cx="881.9" cy="499.2" r="2.67"/><circle cx="925.6" cy="477.5" r="3.19" fill="#020810" stroke="none"/><circle cx="925.6" cy="477.5" r="2.39"/><circle cx="867.3" cy="499.1" r="3.77" fill="#020810" stroke="none"/><circle cx="867.3" cy="499.1" r="2.97"/><circle cx="911.0" cy="477.3" r="3.63" fill="#020810" stroke="none"/><circle cx="911.0" cy="477.3" r="2.83"/><circle cx="852.6" cy="498.9" r="3.46" fill="#020810" stroke="none"/><circle cx="852.6" cy="498.9" r="2.66"/><circle cx="896.4" cy="477.2" r="3.98" fill="#020810" stroke="none"/><circle cx="896.4" cy="477.2" r="3.18"/><circle cx="940.2" cy="455.4" r="3.52" fill="#020810" stroke="none"/><circle cx="940.2" cy="455.4" r="2.72"/><circle cx="838.0" cy="498.8" r="3.21" fill="#020810" stroke="none"/><circle cx="838.0" cy="498.8" r="2.41"/><circle cx="881.8" cy="477.0" r="3.29" fill="#020810" stroke="none"/><circle cx="881.8" cy="477.0" r="2.49"/><circle cx="925.6" cy="455.2" r="3.98" fill="#020810" stroke="none"/><circle cx="925.6" cy="455.2" r="3.18"/><circle cx="823.4" cy="498.6" r="4.08" fill="#020810" stroke="none"/><circle cx="823.4" cy="498.6" r="3.28"/><circle cx="867.2" cy="476.8" r="3.12" fill="#020810" stroke="none"/><circle cx="867.2" cy="476.8" r="2.32"/><circle cx="911.0" cy="455.0" r="3.99" fill="#020810" stroke="none"/><circle cx="911.0" cy="455.0" r="3.19"/><circle cx="852.6" cy="476.7" r="4.22" fill="#020810" stroke="none"/><circle cx="852.6" cy="476.7" r="3.42"/><circle cx="896.4" cy="454.9" r="3.47" fill="#020810" stroke="none"/><circle cx="896.4" cy="454.9" r="2.67"/><circle cx="940.2" cy="433.0" r="3.54" fill="#020810" stroke="none"/><circle cx="940.2" cy="433.0" r="2.74"/><circle cx="837.9" cy="476.5" r="3.12" fill="#020810" stroke="none"/><circle cx="837.9" cy="476.5" r="2.32"/><circle cx="881.8" cy="454.7" r="3.49" fill="#020810" stroke="none"/><circle cx="881.8" cy="454.7" r="2.69"/><circle cx="925.6" cy="432.9" r="3.44" fill="#020810" stroke="none"/><circle cx="925.6" cy="432.9" r="2.64"/><circle cx="823.3" cy="476.4" r="3.59" fill="#020810" stroke="none"/><circle cx="823.3" cy="476.4" r="2.79"/><circle cx="867.1" cy="454.5" r="3.03" fill="#020810" stroke="none"/><circle cx="867.1" cy="454.5" r="2.23"/><circle cx="911.0" cy="432.7" r="4.22" fill="#020810" stroke="none"/><circle cx="911.0" cy="432.7" r="3.42"/><circle cx="852.5" cy="454.4" r="3.46" fill="#020810" stroke="none"/><circle cx="852.5" cy="454.4" r="2.66"/><circle cx="896.4" cy="432.5" r="3.32" fill="#020810" stroke="none"/><circle cx="896.4" cy="432.5" r="2.52"/><circle cx="940.3" cy="410.7" r="3.91" fill="#020810" stroke="none"/><circle cx="940.3" cy="410.7" r="3.11"/><circle cx="837.8" cy="454.2" r="3.53" fill="#020810" stroke="none"/><circle cx="837.8" cy="454.2" r="2.73"/><circle cx="881.7" cy="432.3" r="3.43" fill="#020810" stroke="none"/><circle cx="881.7" cy="432.3" r="2.63"/><circle cx="925.6" cy="410.5" r="3.72" fill="#020810" stroke="none"/><circle cx="925.6" cy="410.5" r="2.92"/><circle cx="823.1" cy="454.0" r="3.04" fill="#020810" stroke="none"/><circle cx="823.1" cy="454.0" r="2.24"/><circle cx="867.1" cy="432.2" r="3.49" fill="#020810" stroke="none"/><circle cx="867.1" cy="432.2" r="2.69"/><circle cx="911.0" cy="410.3" r="3.33" fill="#020810" stroke="none"/><circle cx="911.0" cy="410.3" r="2.53"/><circle cx="852.4" cy="432.0" r="4.20" fill="#020810" stroke="none"/><circle cx="852.4" cy="432.0" r="3.40"/><circle cx="896.3" cy="410.1" r="4.14" fill="#020810" stroke="none"/><circle cx="896.3" cy="410.1" r="3.34"/><circle cx="940.3" cy="388.2" r="3.18" fill="#020810" stroke="none"/><circle cx="940.3" cy="388.2" r="2.38"/><circle cx="837.7" cy="431.8" r="3.41" fill="#020810" stroke="none"/><circle cx="837.7" cy="431.8" r="2.61"/><circle cx="881.7" cy="409.9" r="3.08" fill="#020810" stroke="none"/><circle cx="881.7" cy="409.9" r="2.28"/><circle cx="925.6" cy="388.0" r="3.36" fill="#020810" stroke="none"/><circle cx="925.6" cy="388.0" r="2.56"/><circle cx="823.0" cy="431.6" r="3.94" fill="#020810" stroke="none"/><circle cx="823.0" cy="431.6" r="3.14"/><circle cx="867.0" cy="409.7" r="4.10" fill="#020810" stroke="none"/><circle cx="867.0" cy="409.7" r="3.30"/><circle cx="911.0" cy="387.8" r="3.42" fill="#020810" stroke="none"/><circle cx="911.0" cy="387.8" r="2.62"/><circle cx="852.3" cy="409.5" r="3.23" fill="#020810" stroke="none"/><circle cx="852.3" cy="409.5" r="2.43"/><circle cx="896.3" cy="387.6" r="3.12" fill="#020810" stroke="none"/><circle cx="896.3" cy="387.6" r="2.32"/><circle cx="837.6" cy="409.4" r="3.62" fill="#020810" stroke="none"/><circle cx="837.6" cy="409.4" r="2.82"/><circle cx="881.6" cy="387.4" r="4.15" fill="#020810" stroke="none"/><circle cx="881.6" cy="387.4" r="3.35"/><circle cx="822.9" cy="409.2" r="3.08" fill="#020810" stroke="none"/><circle cx="822.9" cy="409.2" r="2.28"/><circle cx="866.9" cy="387.2" r="3.88" fill="#020810" stroke="none"/><circle cx="866.9" cy="387.2" r="3.08"/><circle cx="852.2" cy="387.0" r="3.04" fill="#020810" stroke="none"/><circle cx="852.2" cy="387.0" r="2.24"/><circle cx="837.5" cy="386.9" r="3.13" fill="#020810" stroke="none"/><circle cx="837.5" cy="386.9" r="2.33"/><circle cx="822.8" cy="386.7" r="3.15" fill="#020810" stroke="none"/><circle cx="822.8" cy="386.7" r="2.35"/><circle cx="943.1" cy="512.7" r="3.73" fill="#020810" stroke="none"/><circle cx="943.1" cy="512.7" r="2.93"/><circle cx="928.4" cy="512.6" r="3.24" fill="#020810" stroke="none"/><circle cx="928.4" cy="512.6" r="2.44"/><circle cx="913.7" cy="512.4" r="3.28" fill="#020810" stroke="none"/><circle cx="913.7" cy="512.4" r="2.48"/><circle cx="899.0" cy="512.3" r="3.63" fill="#020810" stroke="none"/><circle cx="899.0" cy="512.3" r="2.83"/><circle cx="943.2" cy="490.3" r="3.07" fill="#020810" stroke="none"/><circle cx="943.2" cy="490.3" r="2.27"/><circle cx="884.2" cy="512.1" r="3.81" fill="#020810" stroke="none"/><circle cx="884.2" cy="512.1" r="3.01"/><circle cx="928.4" cy="490.1" r="3.08" fill="#020810" stroke="none"/><circle cx="928.4" cy="490.1" r="2.28"/><circle cx="869.5" cy="512.0" r="3.47" fill="#020810" stroke="none"/><circle cx="869.5" cy="512.0" r="2.67"/><circle cx="913.7" cy="490.0" r="3.18" fill="#020810" stroke="none"/><circle cx="913.7" cy="490.0" r="2.38"/><circle cx="854.7" cy="511.8" r="3.14" fill="#020810" stroke="none"/><circle cx="854.7" cy="511.8" r="2.34"/><circle cx="899.0" cy="489.8" r="3.50" fill="#020810" stroke="none"/><circle cx="899.0" cy="489.8" r="2.70"/><circle cx="943.2" cy="467.8" r="3.38" fill="#020810" stroke="none"/><circle cx="943.2" cy="467.8" r="2.58"/><circle cx="840.0" cy="511.7" r="3.31" fill="#020810" stroke="none"/><circle cx="840.0" cy="511.7" r="2.51"/><circle cx="884.2" cy="489.7" r="3.35" fill="#020810" stroke="none"/><circle cx="884.2" cy="489.7" r="2.55"/><circle cx="928.5" cy="467.6" r="3.50" fill="#020810" stroke="none"/><circle cx="928.5" cy="467.6" r="2.70"/><circle cx="825.2" cy="511.5" r="3.11" fill="#020810" stroke="none"/><circle cx="825.2" cy="511.5" r="2.31"/><circle cx="869.4" cy="489.5" r="3.14" fill="#020810" stroke="none"/><circle cx="869.4" cy="489.5" r="2.34"/><circle cx="913.7" cy="467.5" r="3.65" fill="#020810" stroke="none"/><circle cx="913.7" cy="467.5" r="2.85"/><circle cx="854.6" cy="489.3" r="3.66" fill="#020810" stroke="none"/><circle cx="854.6" cy="489.3" r="2.86"/><circle cx="898.9" cy="467.3" r="3.50" fill="#020810" stroke="none"/><circle cx="898.9" cy="467.3" r="2.70"/><circle cx="943.2" cy="445.3" r="4.03" fill="#020810" stroke="none"/><circle cx="943.2" cy="445.3" r="3.23"/><circle cx="839.9" cy="489.2" r="3.62" fill="#020810" stroke="none"/><circle cx="839.9" cy="489.2" r="2.82"/><circle cx="884.2" cy="467.1" r="4.04" fill="#020810" stroke="none"/><circle cx="884.2" cy="467.1" r="3.24"/><circle cx="928.5" cy="445.1" r="3.17" fill="#020810" stroke="none"/><circle cx="928.5" cy="445.1" r="2.37"/><circle cx="825.0" cy="489.0" r="3.83" fill="#020810" stroke="none"/><circle cx="825.0" cy="489.0" r="3.03"/><circle cx="869.4" cy="467.0" r="3.95" fill="#020810" stroke="none"/><circle cx="869.4" cy="467.0" r="3.15"/><circle cx="913.7" cy="444.9" r="4.13" fill="#020810" stroke="none"/><circle cx="913.7" cy="444.9" r="3.33"/><circle cx="854.6" cy="466.8" r="3.25" fill="#020810" stroke="none"/><circle cx="854.6" cy="466.8" r="2.45"/><circle cx="898.9" cy="444.7" r="3.25" fill="#020810" stroke="none"/><circle cx="898.9" cy="444.7" r="2.45"/><circle cx="943.3" cy="422.7" r="4.17" fill="#020810" stroke="none"/><circle cx="943.3" cy="422.7" r="3.37"/><circle cx="839.7" cy="466.6" r="3.16" fill="#020810" stroke="none"/><circle cx="839.7" cy="466.6" r="2.36"/><circle cx="884.1" cy="444.6" r="4.32" fill="#020810" stroke="none"/><circle cx="884.1" cy="444.6" r="3.52"/><circle cx="928.5" cy="422.5" r="4.10" fill="#020810" stroke="none"/><circle cx="928.5" cy="422.5" r="3.30"/><circle cx="824.9" cy="466.5" r="3.10" fill="#020810" stroke="none"/><circle cx="824.9" cy="466.5" r="2.30"/><circle cx="869.3" cy="444.4" r="3.18" fill="#020810" stroke="none"/><circle cx="869.3" cy="444.4" r="2.38"/><circle cx="913.7" cy="422.3" r="3.81" fill="#020810" stroke="none"/><circle cx="913.7" cy="422.3" r="3.01"/><circle cx="854.5" cy="444.2" r="3.20" fill="#020810" stroke="none"/><circle cx="854.5" cy="444.2" r="2.40"/><circle cx="898.9" cy="422.1" r="3.08" fill="#020810" stroke="none"/><circle cx="898.9" cy="422.1" r="2.28"/><circle cx="943.3" cy="400.0" r="4.00" fill="#020810" stroke="none"/><circle cx="943.3" cy="400.0" r="3.20"/><circle cx="839.6" cy="444.0" r="3.37" fill="#020810" stroke="none"/><circle cx="839.6" cy="444.0" r="2.57"/><circle cx="884.1" cy="421.9" r="3.93" fill="#020810" stroke="none"/><circle cx="884.1" cy="421.9" r="3.13"/><circle cx="928.5" cy="399.8" r="3.10" fill="#020810" stroke="none"/><circle cx="928.5" cy="399.8" r="2.30"/><circle cx="824.8" cy="443.9" r="3.35" fill="#020810" stroke="none"/><circle cx="824.8" cy="443.9" r="2.55"/><circle cx="869.2" cy="421.8" r="3.75" fill="#020810" stroke="none"/><circle cx="869.2" cy="421.8" r="2.95"/><circle cx="913.7" cy="399.6" r="3.06" fill="#020810" stroke="none"/><circle cx="913.7" cy="399.6" r="2.26"/><circle cx="854.4" cy="421.6" r="3.15" fill="#020810" stroke="none"/><circle cx="854.4" cy="421.6" r="2.35"/><circle cx="898.9" cy="399.4" r="3.75" fill="#020810" stroke="none"/><circle cx="898.9" cy="399.4" r="2.95"/><circle cx="943.3" cy="377.3" r="4.15" fill="#020810" stroke="none"/><circle cx="943.3" cy="377.3" r="3.35"/><circle cx="839.5" cy="421.4" r="4.27" fill="#020810" stroke="none"/><circle cx="839.5" cy="421.4" r="3.47"/><circle cx="884.0" cy="399.2" r="3.10" fill="#020810" stroke="none"/><circle cx="884.0" cy="399.2" r="2.30"/><circle cx="928.5" cy="377.1" r="3.48" fill="#020810" stroke="none"/><circle cx="928.5" cy="377.1" r="2.68"/><circle cx="824.7" cy="421.2" r="3.87" fill="#020810" stroke="none"/><circle cx="824.7" cy="421.2" r="3.07"/><circle cx="869.2" cy="399.0" r="3.48" fill="#020810" stroke="none"/><circle cx="869.2" cy="399.0" r="2.68"/><circle cx="913.7" cy="376.9" r="3.75" fill="#020810" stroke="none"/><circle cx="913.7" cy="376.9" r="2.95"/><circle cx="854.3" cy="398.9" r="3.15" fill="#020810" stroke="none"/><circle cx="854.3" cy="398.9" r="2.35"/><circle cx="898.8" cy="376.7" r="3.08" fill="#020810" stroke="none"/><circle cx="898.8" cy="376.7" r="2.28"/><circle cx="839.4" cy="398.7" r="3.09" fill="#020810" stroke="none"/><circle cx="839.4" cy="398.7" r="2.29"/><circle cx="884.0" cy="376.5" r="3.06" fill="#020810" stroke="none"/><circle cx="884.0" cy="376.5" r="2.26"/><circle cx="824.6" cy="398.5" r="3.55" fill="#020810" stroke="none"/><circle cx="824.6" cy="398.5" r="2.75"/><circle cx="869.1" cy="376.3" r="3.50" fill="#020810" stroke="none"/><circle cx="869.1" cy="376.3" r="2.70"/><circle cx="854.2" cy="376.1" r="3.58" fill="#020810" stroke="none"/><circle cx="854.2" cy="376.1" r="2.78"/><circle cx="946.2" cy="525.8" r="3.12" fill="#020810" stroke="none"/><circle cx="946.2" cy="525.8" r="2.32"/><circle cx="839.3" cy="375.9" r="3.15" fill="#020810" stroke="none"/><circle cx="839.3" cy="375.9" r="2.35"/><circle cx="931.3" cy="525.7" r="3.16" fill="#020810" stroke="none"/><circle cx="931.3" cy="525.7" r="2.36"/><circle cx="824.4" cy="375.7" r="4.03" fill="#020810" stroke="none"/><circle cx="824.4" cy="375.7" r="3.23"/><circle cx="916.5" cy="525.6" r="4.32" fill="#020810" stroke="none"/><circle cx="916.5" cy="525.6" r="3.52"/><circle cx="901.6" cy="525.4" r="4.20" fill="#020810" stroke="none"/><circle cx="901.6" cy="525.4" r="3.40"/><circle cx="946.2" cy="503.2" r="3.09" fill="#020810" stroke="none"/><circle cx="946.2" cy="503.2" r="2.29"/><circle cx="886.7" cy="525.3" r="3.08" fill="#020810" stroke="none"/><circle cx="886.7" cy="525.3" r="2.28"/><circle cx="931.3" cy="503.0" r="4.25" fill="#020810" stroke="none"/><circle cx="931.3" cy="503.0" r="3.45"/><circle cx="871.8" cy="525.1" r="3.44" fill="#020810" stroke="none"/><circle cx="871.8" cy="525.1" r="2.64"/><circle cx="916.5" cy="502.9" r="3.90" fill="#020810" stroke="none"/><circle cx="916.5" cy="502.9" r="3.10"/><circle cx="856.9" cy="525.0" r="3.28" fill="#020810" stroke="none"/><circle cx="856.9" cy="525.0" r="2.48"/><circle cx="901.6" cy="502.7" r="3.44" fill="#020810" stroke="none"/><circle cx="901.6" cy="502.7" r="2.64"/><circle cx="946.3" cy="480.5" r="3.51" fill="#020810" stroke="none"/><circle cx="946.3" cy="480.5" r="2.71"/><circle cx="841.9" cy="524.8" r="3.40" fill="#020810" stroke="none"/><circle cx="841.9" cy="524.8" r="2.60"/><circle cx="886.6" cy="502.6" r="3.63" fill="#020810" stroke="none"/><circle cx="886.6" cy="502.6" r="2.83"/><circle cx="931.4" cy="480.3" r="3.07" fill="#020810" stroke="none"/><circle cx="931.4" cy="480.3" r="2.27"/><circle cx="827.0" cy="524.7" r="3.79" fill="#020810" stroke="none"/><circle cx="827.0" cy="524.7" r="2.99"/><circle cx="871.7" cy="502.4" r="4.05" fill="#020810" stroke="none"/><circle cx="871.7" cy="502.4" r="3.25"/><circle cx="916.4" cy="480.2" r="3.15" fill="#020810" stroke="none"/><circle cx="916.4" cy="480.2" r="2.35"/><circle cx="856.8" cy="502.3" r="3.43" fill="#020810" stroke="none"/><circle cx="856.8" cy="502.3" r="2.63"/><circle cx="901.5" cy="480.0" r="3.86" fill="#020810" stroke="none"/><circle cx="901.5" cy="480.0" r="3.06"/><circle cx="946.3" cy="457.7" r="3.37" fill="#020810" stroke="none"/><circle cx="946.3" cy="457.7" r="2.57"/><circle cx="841.8" cy="502.1" r="3.16" fill="#020810" stroke="none"/><circle cx="841.8" cy="502.1" r="2.36"/><circle cx="886.6" cy="479.9" r="3.14" fill="#020810" stroke="none"/><circle cx="886.6" cy="479.9" r="2.34"/><circle cx="931.4" cy="457.6" r="3.51" fill="#020810" stroke="none"/><circle cx="931.4" cy="457.6" r="2.71"/><circle cx="826.9" cy="502.0" r="3.07" fill="#020810" stroke="none"/><circle cx="826.9" cy="502.0" r="2.27"/><circle cx="871.7" cy="479.7" r="4.14" fill="#020810" stroke="none"/><circle cx="871.7" cy="479.7" r="3.34"/><circle cx="916.4" cy="457.4" r="3.97" fill="#020810" stroke="none"/><circle cx="916.4" cy="457.4" r="3.17"/><circle cx="856.7" cy="479.5" r="3.81" fill="#020810" stroke="none"/><circle cx="856.7" cy="479.5" r="3.01"/><circle cx="901.5" cy="457.2" r="4.08" fill="#020810" stroke="none"/><circle cx="901.5" cy="457.2" r="3.28"/><circle cx="946.3" cy="434.9" r="3.68" fill="#020810" stroke="none"/><circle cx="946.3" cy="434.9" r="2.88"/><circle cx="841.7" cy="479.4" r="3.37" fill="#020810" stroke="none"/><circle cx="841.7" cy="479.4" r="2.57"/><circle cx="886.6" cy="457.1" r="3.64" fill="#020810" stroke="none"/><circle cx="886.6" cy="457.1" r="2.84"/><circle cx="931.4" cy="434.8" r="3.50" fill="#020810" stroke="none"/><circle cx="931.4" cy="434.8" r="2.70"/><circle cx="826.7" cy="479.2" r="4.32" fill="#020810" stroke="none"/><circle cx="826.7" cy="479.2" r="3.52"/><circle cx="871.6" cy="456.9" r="3.98" fill="#020810" stroke="none"/><circle cx="871.6" cy="456.9" r="3.18"/><circle cx="916.4" cy="434.6" r="3.22" fill="#020810" stroke="none"/><circle cx="916.4" cy="434.6" r="2.42"/><circle cx="856.6" cy="456.7" r="4.18" fill="#020810" stroke="none"/><circle cx="856.6" cy="456.7" r="3.38"/><circle cx="901.5" cy="434.4" r="3.88" fill="#020810" stroke="none"/><circle cx="901.5" cy="434.4" r="3.08"/><circle cx="946.4" cy="412.1" r="3.94" fill="#020810" stroke="none"/><circle cx="946.4" cy="412.1" r="3.14"/><circle cx="841.6" cy="456.5" r="4.00" fill="#020810" stroke="none"/><circle cx="841.6" cy="456.5" r="3.20"/><circle cx="886.5" cy="434.2" r="3.38" fill="#020810" stroke="none"/><circle cx="886.5" cy="434.2" r="2.58"/><circle cx="931.4" cy="411.9" r="4.16" fill="#020810" stroke="none"/><circle cx="931.4" cy="411.9" r="3.36"/><circle cx="826.6" cy="456.4" r="4.13" fill="#020810" stroke="none"/><circle cx="826.6" cy="456.4" r="3.33"/><circle cx="871.5" cy="434.0" r="3.80" fill="#020810" stroke="none"/><circle cx="871.5" cy="434.0" r="3.00"/><circle cx="916.4" cy="411.7" r="3.92" fill="#020810" stroke="none"/><circle cx="916.4" cy="411.7" r="3.12"/><circle cx="856.5" cy="433.8" r="3.92" fill="#020810" stroke="none"/><circle cx="856.5" cy="433.8" r="3.12"/><circle cx="901.5" cy="411.5" r="3.38" fill="#020810" stroke="none"/><circle cx="901.5" cy="411.5" r="2.58"/><circle cx="946.4" cy="389.1" r="3.84" fill="#020810" stroke="none"/><circle cx="946.4" cy="389.1" r="3.04"/><circle cx="841.5" cy="433.7" r="3.10" fill="#020810" stroke="none"/><circle cx="841.5" cy="433.7" r="2.30"/><circle cx="886.5" cy="411.3" r="3.31" fill="#020810" stroke="none"/><circle cx="886.5" cy="411.3" r="2.51"/><circle cx="931.4" cy="388.9" r="3.46" fill="#020810" stroke="none"/><circle cx="931.4" cy="388.9" r="2.66"/><circle cx="826.5" cy="433.5" r="3.08" fill="#020810" stroke="none"/><circle cx="826.5" cy="433.5" r="2.28"/><circle cx="871.5" cy="411.1" r="3.33" fill="#020810" stroke="none"/><circle cx="871.5" cy="411.1" r="2.53"/><circle cx="916.4" cy="388.7" r="3.71" fill="#020810" stroke="none"/><circle cx="916.4" cy="388.7" r="2.91"/><circle cx="856.5" cy="410.9" r="3.69" fill="#020810" stroke="none"/><circle cx="856.5" cy="410.9" r="2.89"/><circle cx="901.4" cy="388.5" r="3.21" fill="#020810" stroke="none"/><circle cx="901.4" cy="388.5" r="2.41"/><circle cx="946.4" cy="366.1" r="4.26" fill="#020810" stroke="none"/><circle cx="946.4" cy="366.1" r="3.46"/><circle cx="841.4" cy="410.7" r="3.75" fill="#020810" stroke="none"/><circle cx="841.4" cy="410.7" r="2.95"/><circle cx="886.4" cy="388.3" r="3.31" fill="#020810" stroke="none"/><circle cx="886.4" cy="388.3" r="2.51"/><circle cx="931.5" cy="365.9" r="3.74" fill="#020810" stroke="none"/><circle cx="931.5" cy="365.9" r="2.94"/><circle cx="826.4" cy="410.5" r="3.61" fill="#020810" stroke="none"/><circle cx="826.4" cy="410.5" r="2.81"/><circle cx="871.4" cy="388.1" r="3.55" fill="#020810" stroke="none"/><circle cx="871.4" cy="388.1" r="2.75"/><circle cx="916.4" cy="365.7" r="3.37" fill="#020810" stroke="none"/><circle cx="916.4" cy="365.7" r="2.57"/><circle cx="856.4" cy="387.9" r="4.37" fill="#020810" stroke="none"/><circle cx="856.4" cy="387.9" r="3.57"/><circle cx="901.4" cy="365.5" r="3.72" fill="#020810" stroke="none"/><circle cx="901.4" cy="365.5" r="2.92"/><circle cx="949.3" cy="539.2" r="3.82" fill="#020810" stroke="none"/><circle cx="949.3" cy="539.2" r="3.02"/><circle cx="841.3" cy="387.7" r="3.92" fill="#020810" stroke="none"/><circle cx="841.3" cy="387.7" r="3.12"/><circle cx="886.4" cy="365.3" r="4.34" fill="#020810" stroke="none"/><circle cx="886.4" cy="365.3" r="3.54"/><circle cx="934.3" cy="539.1" r="3.09" fill="#020810" stroke="none"/><circle cx="934.3" cy="539.1" r="2.29"/><circle cx="826.3" cy="387.5" r="3.68" fill="#020810" stroke="none"/><circle cx="826.3" cy="387.5" r="2.88"/><circle cx="871.4" cy="365.1" r="3.88" fill="#020810" stroke="none"/><circle cx="871.4" cy="365.1" r="3.08"/><circle cx="919.2" cy="539.0" r="3.23" fill="#020810" stroke="none"/><circle cx="919.2" cy="539.0" r="2.43"/><circle cx="856.3" cy="364.9" r="3.39" fill="#020810" stroke="none"/><circle cx="856.3" cy="364.9" r="2.59"/><circle cx="904.2" cy="538.8" r="3.10" fill="#020810" stroke="none"/><circle cx="904.2" cy="538.8" r="2.30"/><circle cx="949.3" cy="516.4" r="3.18" fill="#020810" stroke="none"/><circle cx="949.3" cy="516.4" r="2.38"/><circle cx="841.2" cy="364.6" r="3.36" fill="#020810" stroke="none"/><circle cx="841.2" cy="364.6" r="2.56"/><circle cx="889.2" cy="538.7" r="3.12" fill="#020810" stroke="none"/><circle cx="889.2" cy="538.7" r="2.32"/><circle cx="934.3" cy="516.2" r="3.23" fill="#020810" stroke="none"/><circle cx="934.3" cy="516.2" r="2.43"/><circle cx="826.1" cy="364.4" r="4.19" fill="#020810" stroke="none"/><circle cx="826.1" cy="364.4" r="3.39"/><circle cx="874.1" cy="538.6" r="3.59" fill="#020810" stroke="none"/><circle cx="874.1" cy="538.6" r="2.79"/><circle cx="919.3" cy="516.1" r="3.53" fill="#020810" stroke="none"/><circle cx="919.3" cy="516.1" r="2.73"/><circle cx="859.0" cy="538.4" r="4.32" fill="#020810" stroke="none"/><circle cx="859.0" cy="538.4" r="3.52"/><circle cx="904.2" cy="515.9" r="3.61" fill="#020810" stroke="none"/><circle cx="904.2" cy="515.9" r="2.81"/><circle cx="949.4" cy="493.5" r="4.37" fill="#020810" stroke="none"/><circle cx="949.4" cy="493.5" r="3.57"/><circle cx="843.9" cy="538.3" r="3.72" fill="#020810" stroke="none"/><circle cx="843.9" cy="538.3" r="2.92"/><circle cx="889.1" cy="515.8" r="4.01" fill="#020810" stroke="none"/><circle cx="889.1" cy="515.8" r="3.21"/><circle cx="934.3" cy="493.3" r="3.11" fill="#020810" stroke="none"/><circle cx="934.3" cy="493.3" r="2.31"/><circle cx="828.8" cy="538.1" r="3.66" fill="#020810" stroke="none"/><circle cx="828.8" cy="538.1" r="2.86"/><circle cx="874.0" cy="515.7" r="3.93" fill="#020810" stroke="none"/><circle cx="874.0" cy="515.7" r="3.13"/><circle cx="919.3" cy="493.2" r="3.10" fill="#020810" stroke="none"/><circle cx="919.3" cy="493.2" r="2.30"/><circle cx="859.0" cy="515.5" r="4.25" fill="#020810" stroke="none"/><circle cx="859.0" cy="515.5" r="3.45"/><circle cx="904.2" cy="493.0" r="3.16" fill="#020810" stroke="none"/><circle cx="904.2" cy="493.0" r="2.36"/><circle cx="949.4" cy="470.5" r="3.48" fill="#020810" stroke="none"/><circle cx="949.4" cy="470.5" r="2.68"/><circle cx="843.8" cy="515.4" r="3.17" fill="#020810" stroke="none"/><circle cx="843.8" cy="515.4" r="2.37"/><circle cx="889.1" cy="492.8" r="3.52" fill="#020810" stroke="none"/><circle cx="889.1" cy="492.8" r="2.72"/><circle cx="934.3" cy="470.3" r="3.68" fill="#020810" stroke="none"/><circle cx="934.3" cy="470.3" r="2.88"/><circle cx="828.7" cy="515.2" r="3.11" fill="#020810" stroke="none"/><circle cx="828.7" cy="515.2" r="2.31"/><circle cx="874.0" cy="492.7" r="4.28" fill="#020810" stroke="none"/><circle cx="874.0" cy="492.7" r="3.48"/><circle cx="919.3" cy="470.2" r="3.42" fill="#020810" stroke="none"/><circle cx="919.3" cy="470.2" r="2.62"/><circle cx="858.9" cy="492.5" r="3.56" fill="#020810" stroke="none"/><circle cx="858.9" cy="492.5" r="2.76"/><circle cx="904.2" cy="470.0" r="3.67" fill="#020810" stroke="none"/><circle cx="904.2" cy="470.0" r="2.87"/><circle cx="949.5" cy="447.5" r="3.36" fill="#020810" stroke="none"/><circle cx="949.5" cy="447.5" r="2.56"/><circle cx="843.7" cy="492.4" r="3.27" fill="#020810" stroke="none"/><circle cx="843.7" cy="492.4" r="2.47"/><circle cx="889.1" cy="469.8" r="3.76" fill="#020810" stroke="none"/><circle cx="889.1" cy="469.8" r="2.96"/><circle cx="934.4" cy="447.3" r="3.61" fill="#020810" stroke="none"/><circle cx="934.4" cy="447.3" r="2.81"/><circle cx="828.6" cy="492.2" r="3.27" fill="#020810" stroke="none"/><circle cx="828.6" cy="492.2" r="2.47"/><circle cx="873.9" cy="469.7" r="3.86" fill="#020810" stroke="none"/><circle cx="873.9" cy="469.7" r="3.06"/><circle cx="919.3" cy="447.1" r="3.28" fill="#020810" stroke="none"/><circle cx="919.3" cy="447.1" r="2.48"/><circle cx="858.8" cy="469.5" r="3.10" fill="#020810" stroke="none"/><circle cx="858.8" cy="469.5" r="2.30"/><circle cx="904.1" cy="446.9" r="3.24" fill="#020810" stroke="none"/><circle cx="904.1" cy="446.9" r="2.44"/><circle cx="949.5" cy="424.3" r="3.11" fill="#020810" stroke="none"/><circle cx="949.5" cy="424.3" r="2.31"/><circle cx="843.6" cy="469.3" r="3.17" fill="#020810" stroke="none"/><circle cx="843.6" cy="469.3" r="2.37"/><circle cx="889.0" cy="446.7" r="3.93" fill="#020810" stroke="none"/><circle cx="889.0" cy="446.7" r="3.13"/><circle cx="934.4" cy="424.2" r="3.39" fill="#020810" stroke="none"/><circle cx="934.4" cy="424.2" r="2.59"/><circle cx="828.5" cy="469.1" r="4.19" fill="#020810" stroke="none"/><circle cx="828.5" cy="469.1" r="3.39"/><circle cx="873.9" cy="446.6" r="3.92" fill="#020810" stroke="none"/><circle cx="873.9" cy="446.6" r="3.12"/><circle cx="919.3" cy="424.0" r="3.11" fill="#020810" stroke="none"/><circle cx="919.3" cy="424.0" r="2.31"/><circle cx="858.7" cy="446.4" r="4.38" fill="#020810" stroke="none"/><circle cx="858.7" cy="446.4" r="3.58"/><circle cx="904.1" cy="423.8" r="4.29" fill="#020810" stroke="none"/><circle cx="904.1" cy="423.8" r="3.49"/><circle cx="949.5" cy="401.2" r="3.12" fill="#020810" stroke="none"/><circle cx="949.5" cy="401.2" r="2.32"/><circle cx="843.6" cy="446.2" r="4.21" fill="#020810" stroke="none"/><circle cx="843.6" cy="446.2" r="3.41"/><circle cx="889.0" cy="423.6" r="3.44" fill="#020810" stroke="none"/><circle cx="889.0" cy="423.6" r="2.64"/><circle cx="934.4" cy="401.0" r="3.50" fill="#020810" stroke="none"/><circle cx="934.4" cy="401.0" r="2.70"/><circle cx="828.4" cy="446.0" r="4.35" fill="#020810" stroke="none"/><circle cx="828.4" cy="446.0" r="3.55"/><circle cx="873.8" cy="423.4" r="3.24" fill="#020810" stroke="none"/><circle cx="873.8" cy="423.4" r="2.44"/><circle cx="919.3" cy="400.8" r="3.57" fill="#020810" stroke="none"/><circle cx="919.3" cy="400.8" r="2.77"/><circle cx="858.6" cy="423.2" r="4.28" fill="#020810" stroke="none"/><circle cx="858.6" cy="423.2" r="3.48"/><circle cx="904.1" cy="400.6" r="3.88" fill="#020810" stroke="none"/><circle cx="904.1" cy="400.6" r="3.08"/><circle cx="949.6" cy="378.0" r="3.49" fill="#020810" stroke="none"/><circle cx="949.6" cy="378.0" r="2.69"/><circle cx="843.5" cy="423.0" r="4.37" fill="#020810" stroke="none"/><circle cx="843.5" cy="423.0" r="3.57"/><circle cx="888.9" cy="400.4" r="4.05" fill="#020810" stroke="none"/><circle cx="888.9" cy="400.4" r="3.25"/><circle cx="934.4" cy="377.8" r="3.69" fill="#020810" stroke="none"/><circle cx="934.4" cy="377.8" r="2.89"/><circle cx="828.3" cy="422.8" r="3.15" fill="#020810" stroke="none"/><circle cx="828.3" cy="422.8" r="2.35"/><circle cx="873.8" cy="400.2" r="3.72" fill="#020810" stroke="none"/><circle cx="873.8" cy="400.2" r="2.92"/><circle cx="919.3" cy="377.5" r="3.48" fill="#020810" stroke="none"/><circle cx="919.3" cy="377.5" r="2.68"/><circle cx="858.6" cy="400.0" r="3.21" fill="#020810" stroke="none"/><circle cx="858.6" cy="400.0" r="2.41"/><circle cx="904.1" cy="377.3" r="3.12" fill="#020810" stroke="none"/><circle cx="904.1" cy="377.3" r="2.32"/><circle cx="949.6" cy="354.7" r="3.58" fill="#020810" stroke="none"/><circle cx="949.6" cy="354.7" r="2.78"/><circle cx="843.4" cy="399.8" r="3.16" fill="#020810" stroke="none"/><circle cx="843.4" cy="399.8" r="2.36"/><circle cx="888.9" cy="377.1" r="3.46" fill="#020810" stroke="none"/><circle cx="888.9" cy="377.1" r="2.66"/><circle cx="934.5" cy="354.5" r="3.79" fill="#020810" stroke="none"/><circle cx="934.5" cy="354.5" r="2.99"/><circle cx="828.1" cy="399.6" r="3.48" fill="#020810" stroke="none"/><circle cx="828.1" cy="399.6" r="2.68"/><circle cx="873.7" cy="376.9" r="3.26" fill="#020810" stroke="none"/><circle cx="873.7" cy="376.9" r="2.46"/><circle cx="919.3" cy="354.2" r="3.66" fill="#020810" stroke="none"/><circle cx="919.3" cy="354.2" r="2.86"/><circle cx="858.5" cy="376.7" r="3.44" fill="#020810" stroke="none"/><circle cx="858.5" cy="376.7" r="2.64"/><circle cx="904.1" cy="354.0" r="3.99" fill="#020810" stroke="none"/><circle cx="904.1" cy="354.0" r="3.19"/><circle cx="952.5" cy="529.9" r="3.59" fill="#020810" stroke="none"/><circle cx="952.5" cy="529.9" r="2.79"/><circle cx="843.3" cy="376.5" r="4.41" fill="#020810" stroke="none"/><circle cx="843.3" cy="376.5" r="3.61"/><circle cx="888.9" cy="353.8" r="4.32" fill="#020810" stroke="none"/><circle cx="888.9" cy="353.8" r="3.52"/><circle cx="937.3" cy="529.7" r="3.91" fill="#020810" stroke="none"/><circle cx="937.3" cy="529.7" r="3.11"/><circle cx="828.0" cy="376.3" r="3.25" fill="#020810" stroke="none"/><circle cx="828.0" cy="376.3" r="2.45"/><circle cx="873.6" cy="353.6" r="3.15" fill="#020810" stroke="none"/><circle cx="873.6" cy="353.6" r="2.35"/><circle cx="922.1" cy="529.6" r="4.20" fill="#020810" stroke="none"/><circle cx="922.1" cy="529.6" r="3.40"/><circle cx="858.4" cy="353.4" r="4.00" fill="#020810" stroke="none"/><circle cx="858.4" cy="353.4" r="3.20"/><circle cx="906.9" cy="529.4" r="3.73" fill="#020810" stroke="none"/><circle cx="906.9" cy="529.4" r="2.93"/><circle cx="952.6" cy="506.7" r="3.37" fill="#020810" stroke="none"/><circle cx="952.6" cy="506.7" r="2.57"/><circle cx="843.2" cy="353.1" r="3.28" fill="#020810" stroke="none"/><circle cx="843.2" cy="353.1" r="2.48"/><circle cx="891.7" cy="529.3" r="3.83" fill="#020810" stroke="none"/><circle cx="891.7" cy="529.3" r="3.03"/><circle cx="937.3" cy="506.6" r="3.64" fill="#020810" stroke="none"/><circle cx="937.3" cy="506.6" r="2.84"/><circle cx="827.9" cy="352.9" r="3.68" fill="#020810" stroke="none"/><circle cx="827.9" cy="352.9" r="2.88"/><circle cx="876.4" cy="529.1" r="3.75" fill="#020810" stroke="none"/><circle cx="876.4" cy="529.1" r="2.95"/><circle cx="922.1" cy="506.4" r="3.95" fill="#020810" stroke="none"/><circle cx="922.1" cy="506.4" r="3.15"/><circle cx="861.2" cy="529.0" r="3.21" fill="#020810" stroke="none"/><circle cx="861.2" cy="529.0" r="2.41"/><circle cx="906.9" cy="506.3" r="3.26" fill="#020810" stroke="none"/><circle cx="906.9" cy="506.3" r="2.46"/><circle cx="952.6" cy="483.5" r="4.39" fill="#020810" stroke="none"/><circle cx="952.6" cy="483.5" r="3.59"/><circle cx="845.9" cy="528.9" r="4.26" fill="#020810" stroke="none"/><circle cx="845.9" cy="528.9" r="3.46"/><circle cx="891.6" cy="506.1" r="4.18" fill="#020810" stroke="none"/><circle cx="891.6" cy="506.1" r="3.38"/><circle cx="937.4" cy="483.3" r="3.13" fill="#020810" stroke="none"/><circle cx="937.4" cy="483.3" r="2.33"/><circle cx="830.6" cy="528.7" r="3.13" fill="#020810" stroke="none"/><circle cx="830.6" cy="528.7" r="2.33"/><circle cx="876.4" cy="505.9" r="3.28" fill="#020810" stroke="none"/><circle cx="876.4" cy="505.9" r="2.48"/><circle cx="922.1" cy="483.2" r="3.45" fill="#020810" stroke="none"/><circle cx="922.1" cy="483.2" r="2.65"/><circle cx="861.1" cy="505.8" r="3.74" fill="#020810" stroke="none"/><circle cx="861.1" cy="505.8" r="2.94"/><circle cx="906.9" cy="483.0" r="3.15" fill="#020810" stroke="none"/><circle cx="906.9" cy="483.0" r="2.35"/><circle cx="952.6" cy="460.2" r="3.61" fill="#020810" stroke="none"/><circle cx="952.6" cy="460.2" r="2.81"/><circle cx="845.8" cy="505.6" r="3.14" fill="#020810" stroke="none"/><circle cx="845.8" cy="505.6" r="2.34"/><circle cx="891.6" cy="482.9" r="3.15" fill="#020810" stroke="none"/><circle cx="891.6" cy="482.9" r="2.35"/><circle cx="937.4" cy="460.1" r="3.82" fill="#020810" stroke="none"/><circle cx="937.4" cy="460.1" r="3.02"/><circle cx="830.5" cy="505.5" r="3.63" fill="#020810" stroke="none"/><circle cx="830.5" cy="505.5" r="2.83"/><circle cx="876.3" cy="482.7" r="3.75" fill="#020810" stroke="none"/><circle cx="876.3" cy="482.7" r="2.95"/><circle cx="922.1" cy="459.9" r="3.39" fill="#020810" stroke="none"/><circle cx="922.1" cy="459.9" r="2.59"/><circle cx="861.0" cy="482.5" r="3.53" fill="#020810" stroke="none"/><circle cx="861.0" cy="482.5" r="2.73"/><circle cx="906.9" cy="459.7" r="3.23" fill="#020810" stroke="none"/><circle cx="906.9" cy="459.7" r="2.43"/><circle cx="952.7" cy="436.9" r="3.36" fill="#020810" stroke="none"/><circle cx="952.7" cy="436.9" r="2.56"/><circle cx="845.7" cy="482.4" r="3.94" fill="#020810" stroke="none"/><circle cx="845.7" cy="482.4" r="3.14"/><circle cx="891.6" cy="459.5" r="4.12" fill="#020810" stroke="none"/><circle cx="891.6" cy="459.5" r="3.32"/><circle cx="937.4" cy="436.7" r="3.15" fill="#020810" stroke="none"/><circle cx="937.4" cy="436.7" r="2.35"/><circle cx="830.4" cy="482.2" r="3.17" fill="#020810" stroke="none"/><circle cx="830.4" cy="482.2" r="2.37"/><circle cx="876.3" cy="459.4" r="4.06" fill="#020810" stroke="none"/><circle cx="876.3" cy="459.4" r="3.26"/><circle cx="922.1" cy="436.5" r="3.74" fill="#020810" stroke="none"/><circle cx="922.1" cy="436.5" r="2.94"/><circle cx="860.9" cy="459.2" r="3.99" fill="#020810" stroke="none"/><circle cx="860.9" cy="459.2" r="3.19"/><circle cx="906.8" cy="436.4" r="3.24" fill="#020810" stroke="none"/><circle cx="906.8" cy="436.4" r="2.44"/><circle cx="952.7" cy="413.5" r="3.46" fill="#020810" stroke="none"/><circle cx="952.7" cy="413.5" r="2.66"/><circle cx="845.6" cy="459.0" r="3.28" fill="#020810" stroke="none"/><circle cx="845.6" cy="459.0" r="2.48"/><circle cx="891.5" cy="436.2" r="4.07" fill="#020810" stroke="none"/><circle cx="891.5" cy="436.2" r="3.27"/><circle cx="937.5" cy="413.3" r="3.39" fill="#020810" stroke="none"/><circle cx="937.5" cy="413.3" r="2.59"/><circle cx="830.3" cy="458.8" r="3.80" fill="#020810" stroke="none"/><circle cx="830.3" cy="458.8" r="3.00"/><circle cx="876.2" cy="436.0" r="4.42" fill="#020810" stroke="none"/><circle cx="876.2" cy="436.0" r="3.62"/><circle cx="922.1" cy="413.1" r="3.35" fill="#020810" stroke="none"/><circle cx="922.1" cy="413.1" r="2.55"/><circle cx="860.9" cy="435.8" r="3.63" fill="#020810" stroke="none"/><circle cx="860.9" cy="435.8" r="2.83"/><circle cx="906.8" cy="412.9" r="3.95" fill="#020810" stroke="none"/><circle cx="906.8" cy="412.9" r="3.15"/><circle cx="952.8" cy="390.1" r="4.28" fill="#020810" stroke="none"/><circle cx="952.8" cy="390.1" r="3.48"/><circle cx="845.5" cy="435.6" r="3.47" fill="#020810" stroke="none"/><circle cx="845.5" cy="435.6" r="2.67"/><circle cx="891.5" cy="412.7" r="3.40" fill="#020810" stroke="none"/><circle cx="891.5" cy="412.7" r="2.60"/><circle cx="937.5" cy="389.8" r="3.16" fill="#020810" stroke="none"/><circle cx="937.5" cy="389.8" r="2.36"/><circle cx="830.2" cy="435.4" r="4.20" fill="#020810" stroke="none"/><circle cx="830.2" cy="435.4" r="3.40"/><circle cx="876.2" cy="412.5" r="3.15" fill="#020810" stroke="none"/><circle cx="876.2" cy="412.5" r="2.35"/><circle cx="922.2" cy="389.6" r="3.16" fill="#020810" stroke="none"/><circle cx="922.2" cy="389.6" r="2.36"/><circle cx="860.8" cy="412.3" r="3.66" fill="#020810" stroke="none"/><circle cx="860.8" cy="412.3" r="2.86"/><circle cx="906.8" cy="389.4" r="3.55" fill="#020810" stroke="none"/><circle cx="906.8" cy="389.4" r="2.75"/><circle cx="952.8" cy="366.5" r="3.85" fill="#020810" stroke="none"/><circle cx="952.8" cy="366.5" r="3.05"/><circle cx="845.4" cy="412.1" r="3.32" fill="#020810" stroke="none"/><circle cx="845.4" cy="412.1" r="2.52"/><circle cx="891.5" cy="389.2" r="4.01" fill="#020810" stroke="none"/><circle cx="891.5" cy="389.2" r="3.21"/><circle cx="937.5" cy="366.3" r="3.16" fill="#020810" stroke="none"/><circle cx="937.5" cy="366.3" r="2.36"/><circle cx="830.0" cy="412.0" r="3.25" fill="#020810" stroke="none"/><circle cx="830.0" cy="412.0" r="2.45"/><circle cx="876.1" cy="389.0" r="3.82" fill="#020810" stroke="none"/><circle cx="876.1" cy="389.0" r="3.02"/><circle cx="922.2" cy="366.1" r="3.16" fill="#020810" stroke="none"/><circle cx="922.2" cy="366.1" r="2.36"/><circle cx="860.7" cy="388.8" r="3.33" fill="#020810" stroke="none"/><circle cx="860.7" cy="388.8" r="2.53"/><circle cx="906.8" cy="365.9" r="3.93" fill="#020810" stroke="none"/><circle cx="906.8" cy="365.9" r="3.13"/><circle cx="845.3" cy="388.6" r="3.87" fill="#020810" stroke="none"/><circle cx="845.3" cy="388.6" r="3.07"/><circle cx="891.4" cy="365.7" r="3.31" fill="#020810" stroke="none"/><circle cx="891.4" cy="365.7" r="2.51"/><circle cx="829.9" cy="388.4" r="3.20" fill="#020810" stroke="none"/><circle cx="829.9" cy="388.4" r="2.40"/><circle cx="876.0" cy="365.5" r="3.39" fill="#020810" stroke="none"/><circle cx="876.0" cy="365.5" r="2.59"/><circle cx="860.6" cy="365.2" r="3.93" fill="#020810" stroke="none"/><circle cx="860.6" cy="365.2" r="3.13"/><circle cx="955.8" cy="520.2" r="3.40" fill="#020810" stroke="none"/><circle cx="955.8" cy="520.2" r="2.60"/><circle cx="845.2" cy="365.0" r="3.18" fill="#020810" stroke="none"/><circle cx="845.2" cy="365.0" r="2.38"/><circle cx="940.4" cy="520.1" r="3.90" fill="#020810" stroke="none"/><circle cx="940.4" cy="520.1" r="3.10"/><circle cx="829.8" cy="364.8" r="3.68" fill="#020810" stroke="none"/><circle cx="829.8" cy="364.8" r="2.88"/><circle cx="925.0" cy="519.9" r="4.30" fill="#020810" stroke="none"/><circle cx="925.0" cy="519.9" r="3.50"/><circle cx="909.6" cy="519.8" r="4.34" fill="#020810" stroke="none"/><circle cx="909.6" cy="519.8" r="3.54"/><circle cx="955.9" cy="496.8" r="4.29" fill="#020810" stroke="none"/><circle cx="955.9" cy="496.8" r="3.49"/><circle cx="894.2" cy="519.6" r="3.50" fill="#020810" stroke="none"/><circle cx="894.2" cy="519.6" r="2.70"/><circle cx="940.5" cy="496.6" r="4.08" fill="#020810" stroke="none"/><circle cx="940.5" cy="496.6" r="3.28"/><circle cx="878.8" cy="519.5" r="3.34" fill="#020810" stroke="none"/><circle cx="878.8" cy="519.5" r="2.54"/><circle cx="925.1" cy="496.5" r="3.36" fill="#020810" stroke="none"/><circle cx="925.1" cy="496.5" r="2.56"/><circle cx="863.4" cy="519.3" r="3.45" fill="#020810" stroke="none"/><circle cx="863.4" cy="519.3" r="2.65"/><circle cx="909.6" cy="496.3" r="4.34" fill="#020810" stroke="none"/><circle cx="909.6" cy="496.3" r="3.54"/><circle cx="955.9" cy="473.3" r="4.26" fill="#020810" stroke="none"/><circle cx="955.9" cy="473.3" r="3.46"/><circle cx="847.9" cy="519.2" r="3.29" fill="#020810" stroke="none"/><circle cx="847.9" cy="519.2" r="2.49"/><circle cx="894.2" cy="496.2" r="3.41" fill="#020810" stroke="none"/><circle cx="894.2" cy="496.2" r="2.61"/><circle cx="940.5" cy="473.1" r="3.41" fill="#020810" stroke="none"/><circle cx="940.5" cy="473.1" r="2.61"/><circle cx="832.5" cy="519.0" r="3.41" fill="#020810" stroke="none"/><circle cx="832.5" cy="519.0" r="2.61"/><circle cx="878.8" cy="496.0" r="3.45" fill="#020810" stroke="none"/><circle cx="878.8" cy="496.0" r="2.65"/><circle cx="925.1" cy="473.0" r="3.44" fill="#020810" stroke="none"/><circle cx="925.1" cy="473.0" r="2.64"/><circle cx="863.3" cy="495.8" r="3.25" fill="#020810" stroke="none"/><circle cx="863.3" cy="495.8" r="2.45"/><circle cx="909.6" cy="472.8" r="3.68" fill="#020810" stroke="none"/><circle cx="909.6" cy="472.8" r="2.88"/><circle cx="956.0" cy="449.7" r="4.07" fill="#020810" stroke="none"/><circle cx="956.0" cy="449.7" r="3.27"/><circle cx="847.8" cy="495.7" r="3.65" fill="#020810" stroke="none"/><circle cx="847.8" cy="495.7" r="2.85"/><circle cx="894.2" cy="472.6" r="4.15" fill="#020810" stroke="none"/><circle cx="894.2" cy="472.6" r="3.35"/><circle cx="940.5" cy="449.6" r="3.68" fill="#020810" stroke="none"/><circle cx="940.5" cy="449.6" r="2.88"/><circle cx="832.3" cy="495.5" r="3.23" fill="#020810" stroke="none"/><circle cx="832.3" cy="495.5" r="2.43"/><circle cx="878.7" cy="472.5" r="4.01" fill="#020810" stroke="none"/><circle cx="878.7" cy="472.5" r="3.21"/><circle cx="925.1" cy="449.4" r="4.24" fill="#020810" stroke="none"/><circle cx="925.1" cy="449.4" r="3.44"/><circle cx="863.2" cy="472.3" r="3.33" fill="#020810" stroke="none"/><circle cx="863.2" cy="472.3" r="2.53"/><circle cx="909.6" cy="449.2" r="3.16" fill="#020810" stroke="none"/><circle cx="909.6" cy="449.2" r="2.36"/><circle cx="956.0" cy="426.1" r="3.61" fill="#020810" stroke="none"/><circle cx="956.0" cy="426.1" r="2.81"/><circle cx="847.7" cy="472.1" r="3.66" fill="#020810" stroke="none"/><circle cx="847.7" cy="472.1" r="2.86"/><circle cx="894.1" cy="449.0" r="3.69" fill="#020810" stroke="none"/><circle cx="894.1" cy="449.0" r="2.89"/><circle cx="940.6" cy="425.9" r="4.41" fill="#020810" stroke="none"/><circle cx="940.6" cy="425.9" r="3.61"/><circle cx="832.2" cy="471.9" r="3.82" fill="#020810" stroke="none"/><circle cx="832.2" cy="471.9" r="3.02"/><circle cx="878.7" cy="448.8" r="4.09" fill="#020810" stroke="none"/><circle cx="878.7" cy="448.8" r="3.29"/><circle cx="925.1" cy="425.7" r="3.17" fill="#020810" stroke="none"/><circle cx="925.1" cy="425.7" r="2.37"/><circle cx="863.2" cy="448.7" r="3.66" fill="#020810" stroke="none"/><circle cx="863.2" cy="448.7" r="2.86"/><circle cx="909.6" cy="425.5" r="4.06" fill="#020810" stroke="none"/><circle cx="909.6" cy="425.5" r="3.26"/><circle cx="956.1" cy="402.4" r="3.18" fill="#020810" stroke="none"/><circle cx="956.1" cy="402.4" r="2.38"/><circle cx="847.6" cy="448.5" r="3.18" fill="#020810" stroke="none"/><circle cx="847.6" cy="448.5" r="2.38"/><circle cx="894.1" cy="425.3" r="3.97" fill="#020810" stroke="none"/><circle cx="894.1" cy="425.3" r="3.17"/><circle cx="940.6" cy="402.2" r="4.28" fill="#020810" stroke="none"/><circle cx="940.6" cy="402.2" r="3.48"/><circle cx="832.1" cy="448.3" r="3.18" fill="#020810" stroke="none"/><circle cx="832.1" cy="448.3" r="2.38"/><circle cx="878.6" cy="425.1" r="3.80" fill="#020810" stroke="none"/><circle cx="878.6" cy="425.1" r="3.00"/><circle cx="925.1" cy="402.0" r="3.22" fill="#020810" stroke="none"/><circle cx="925.1" cy="402.0" r="2.42"/><circle cx="863.1" cy="425.0" r="3.99" fill="#020810" stroke="none"/><circle cx="863.1" cy="425.0" r="3.19"/><circle cx="909.6" cy="401.8" r="3.83" fill="#020810" stroke="none"/><circle cx="909.6" cy="401.8" r="3.03"/><circle cx="956.1" cy="378.6" r="3.30" fill="#020810" stroke="none"/><circle cx="956.1" cy="378.6" r="2.50"/><circle cx="847.5" cy="424.8" r="3.28" fill="#020810" stroke="none"/><circle cx="847.5" cy="424.8" r="2.48"/><circle cx="894.1" cy="401.6" r="4.03" fill="#020810" stroke="none"/><circle cx="894.1" cy="401.6" r="3.23"/><circle cx="940.6" cy="378.4" r="3.63" fill="#020810" stroke="none"/><circle cx="940.6" cy="378.4" r="2.83"/><circle cx="832.0" cy="424.6" r="4.03" fill="#020810" stroke="none"/><circle cx="832.0" cy="424.6" r="3.23"/><circle cx="878.5" cy="401.4" r="3.46" fill="#020810" stroke="none"/><circle cx="878.5" cy="401.4" r="2.66"/><circle cx="925.1" cy="378.2" r="3.40" fill="#020810" stroke="none"/><circle cx="925.1" cy="378.2" r="2.60"/><circle cx="863.0" cy="401.2" r="4.43" fill="#020810" stroke="none"/><circle cx="863.0" cy="401.2" r="3.63"/><circle cx="909.6" cy="378.0" r="3.87" fill="#020810" stroke="none"/><circle cx="909.6" cy="378.0" r="3.07"/><circle cx="847.4" cy="401.0" r="3.59" fill="#020810" stroke="none"/><circle cx="847.4" cy="401.0" r="2.79"/><circle cx="894.0" cy="377.8" r="3.66" fill="#020810" stroke="none"/><circle cx="894.0" cy="377.8" r="2.86"/><circle cx="831.9" cy="400.8" r="3.96" fill="#020810" stroke="none"/><circle cx="831.9" cy="400.8" r="3.16"/><circle cx="878.5" cy="377.6" r="3.93" fill="#020810" stroke="none"/><circle cx="878.5" cy="377.6" r="3.13"/><circle cx="862.9" cy="377.4" r="4.32" fill="#020810" stroke="none"/><circle cx="862.9" cy="377.4" r="3.52"/><circle cx="847.4" cy="377.2" r="3.49" fill="#020810" stroke="none"/><circle cx="847.4" cy="377.2" r="2.69"/><circle cx="831.8" cy="376.9" r="4.15" fill="#020810" stroke="none"/><circle cx="831.8" cy="376.9" r="3.35"/><circle cx="959.2" cy="510.4" r="3.87" fill="#020810" stroke="none"/><circle cx="959.2" cy="510.4" r="3.07"/><circle cx="943.6" cy="510.2" r="4.21" fill="#020810" stroke="none"/><circle cx="943.6" cy="510.2" r="3.41"/><circle cx="928.1" cy="510.1" r="4.12" fill="#020810" stroke="none"/><circle cx="928.1" cy="510.1" r="3.32"/><circle cx="912.5" cy="509.9" r="4.17" fill="#020810" stroke="none"/><circle cx="912.5" cy="509.9" r="3.37"/><circle cx="959.2" cy="486.7" r="4.28" fill="#020810" stroke="none"/><circle cx="959.2" cy="486.7" r="3.48"/><circle cx="896.9" cy="509.8" r="4.42" fill="#020810" stroke="none"/><circle cx="896.9" cy="509.8" r="3.62"/><circle cx="943.7" cy="486.5" r="3.83" fill="#020810" stroke="none"/><circle cx="943.7" cy="486.5" r="3.03"/><circle cx="881.3" cy="509.6" r="3.65" fill="#020810" stroke="none"/><circle cx="881.3" cy="509.6" r="2.85"/><circle cx="928.1" cy="486.3" r="3.95" fill="#020810" stroke="none"/><circle cx="928.1" cy="486.3" r="3.15"/><circle cx="865.6" cy="509.5" r="4.12" fill="#020810" stroke="none"/><circle cx="865.6" cy="509.5" r="3.32"/><circle cx="912.5" cy="486.2" r="3.51" fill="#020810" stroke="none"/><circle cx="912.5" cy="486.2" r="2.71"/><circle cx="959.3" cy="462.8" r="3.51" fill="#020810" stroke="none"/><circle cx="959.3" cy="462.8" r="2.71"/><circle cx="850.0" cy="509.3" r="3.24" fill="#020810" stroke="none"/><circle cx="850.0" cy="509.3" r="2.44"/><circle cx="896.8" cy="486.0" r="4.01" fill="#020810" stroke="none"/><circle cx="896.8" cy="486.0" r="3.21"/><circle cx="943.7" cy="462.7" r="4.50" fill="#020810" stroke="none"/><circle cx="943.7" cy="462.7" r="3.70"/><circle cx="834.3" cy="509.1" r="3.46" fill="#020810" stroke="none"/><circle cx="834.3" cy="509.1" r="2.66"/><circle cx="881.2" cy="485.8" r="3.25" fill="#020810" stroke="none"/><circle cx="881.2" cy="485.8" r="2.45"/><circle cx="928.1" cy="462.5" r="3.28" fill="#020810" stroke="none"/><circle cx="928.1" cy="462.5" r="2.48"/><circle cx="865.6" cy="485.7" r="3.52" fill="#020810" stroke="none"/><circle cx="865.6" cy="485.7" r="2.72"/><circle cx="912.5" cy="462.3" r="3.37" fill="#020810" stroke="none"/><circle cx="912.5" cy="462.3" r="2.57"/><circle cx="959.4" cy="439.0" r="4.46" fill="#020810" stroke="none"/><circle cx="959.4" cy="439.0" r="3.66"/><circle cx="849.9" cy="485.5" r="3.19" fill="#020810" stroke="none"/><circle cx="849.9" cy="485.5" r="2.39"/><circle cx="896.8" cy="462.1" r="3.38" fill="#020810" stroke="none"/><circle cx="896.8" cy="462.1" r="2.58"/><circle cx="943.7" cy="438.8" r="3.22" fill="#020810" stroke="none"/><circle cx="943.7" cy="438.8" r="2.42"/><circle cx="834.2" cy="485.3" r="3.85" fill="#020810" stroke="none"/><circle cx="834.2" cy="485.3" r="3.05"/><circle cx="881.2" cy="462.0" r="4.08" fill="#020810" stroke="none"/><circle cx="881.2" cy="462.0" r="3.28"/><circle cx="928.1" cy="438.6" r="3.27" fill="#020810" stroke="none"/><circle cx="928.1" cy="438.6" r="2.47"/><circle cx="865.5" cy="461.8" r="3.20" fill="#020810" stroke="none"/><circle cx="865.5" cy="461.8" r="2.40"/><circle cx="912.4" cy="438.4" r="3.57" fill="#020810" stroke="none"/><circle cx="912.4" cy="438.4" r="2.77"/><circle cx="959.4" cy="415.0" r="3.75" fill="#020810" stroke="none"/><circle cx="959.4" cy="415.0" r="2.95"/><circle cx="849.8" cy="461.6" r="4.34" fill="#020810" stroke="none"/><circle cx="849.8" cy="461.6" r="3.54"/><circle cx="896.8" cy="438.2" r="3.19" fill="#020810" stroke="none"/><circle cx="896.8" cy="438.2" r="2.39"/><circle cx="943.8" cy="414.8" r="3.22" fill="#020810" stroke="none"/><circle cx="943.8" cy="414.8" r="2.42"/><circle cx="834.1" cy="461.4" r="3.27" fill="#020810" stroke="none"/><circle cx="834.1" cy="461.4" r="2.47"/><circle cx="881.1" cy="438.0" r="3.30" fill="#020810" stroke="none"/><circle cx="881.1" cy="438.0" r="2.50"/><circle cx="928.1" cy="414.6" r="3.32" fill="#020810" stroke="none"/><circle cx="928.1" cy="414.6" r="2.52"/><circle cx="865.4" cy="437.8" r="3.98" fill="#020810" stroke="none"/><circle cx="865.4" cy="437.8" r="3.18"/><circle cx="912.4" cy="414.4" r="3.77" fill="#020810" stroke="none"/><circle cx="912.4" cy="414.4" r="2.97"/><circle cx="959.5" cy="391.0" r="3.31" fill="#020810" stroke="none"/><circle cx="959.5" cy="391.0" r="2.51"/><circle cx="849.7" cy="437.7" r="3.28" fill="#020810" stroke="none"/><circle cx="849.7" cy="437.7" r="2.48"/><circle cx="896.8" cy="414.2" r="3.36" fill="#020810" stroke="none"/><circle cx="896.8" cy="414.2" r="2.56"/><circle cx="943.8" cy="390.8" r="3.27" fill="#020810" stroke="none"/><circle cx="943.8" cy="390.8" r="2.47"/><circle cx="834.0" cy="437.5" r="4.05" fill="#020810" stroke="none"/><circle cx="834.0" cy="437.5" r="3.25"/><circle cx="881.1" cy="414.0" r="3.40" fill="#020810" stroke="none"/><circle cx="881.1" cy="414.0" r="2.60"/><circle cx="928.1" cy="390.6" r="3.70" fill="#020810" stroke="none"/><circle cx="928.1" cy="390.6" r="2.90"/><circle cx="865.3" cy="413.8" r="4.16" fill="#020810" stroke="none"/><circle cx="865.3" cy="413.8" r="3.36"/><circle cx="912.4" cy="390.4" r="3.60" fill="#020810" stroke="none"/><circle cx="912.4" cy="390.4" r="2.80"/><circle cx="849.6" cy="413.6" r="3.35" fill="#020810" stroke="none"/><circle cx="849.6" cy="413.6" r="2.55"/><circle cx="896.7" cy="390.2" r="4.30" fill="#020810" stroke="none"/><circle cx="896.7" cy="390.2" r="3.50"/><circle cx="833.9" cy="413.4" r="4.36" fill="#020810" stroke="none"/><circle cx="833.9" cy="413.4" r="3.56"/><circle cx="881.0" cy="390.0" r="3.43" fill="#020810" stroke="none"/><circle cx="881.0" cy="390.0" r="2.63"/><circle cx="865.3" cy="389.8" r="3.71" fill="#020810" stroke="none"/><circle cx="865.3" cy="389.8" r="2.91"/><circle cx="849.5" cy="389.6" r="4.45" fill="#020810" stroke="none"/><circle cx="849.5" cy="389.6" r="3.65"/><circle cx="833.8" cy="389.4" r="3.61" fill="#020810" stroke="none"/><circle cx="833.8" cy="389.4" r="2.81"/><circle cx="962.7" cy="500.3" r="3.32" fill="#020810" stroke="none"/><circle cx="962.7" cy="500.3" r="2.52"/><circle cx="946.9" cy="500.1" r="3.21" fill="#020810" stroke="none"/><circle cx="946.9" cy="500.1" r="2.41"/><circle cx="931.1" cy="500.0" r="4.44" fill="#020810" stroke="none"/><circle cx="931.1" cy="500.0" r="3.64"/><circle cx="915.4" cy="499.8" r="4.15" fill="#020810" stroke="none"/><circle cx="915.4" cy="499.8" r="3.35"/><circle cx="962.7" cy="476.2" r="3.50" fill="#020810" stroke="none"/><circle cx="962.7" cy="476.2" r="2.70"/><circle cx="899.6" cy="499.7" r="3.69" fill="#020810" stroke="none"/><circle cx="899.6" cy="499.7" r="2.89"/><circle cx="946.9" cy="476.1" r="3.67" fill="#020810" stroke="none"/><circle cx="946.9" cy="476.1" r="2.87"/><circle cx="883.8" cy="499.5" r="3.37" fill="#020810" stroke="none"/><circle cx="883.8" cy="499.5" r="2.57"/><circle cx="931.2" cy="475.9" r="4.54" fill="#020810" stroke="none"/><circle cx="931.2" cy="475.9" r="3.74"/><circle cx="867.9" cy="499.3" r="3.90" fill="#020810" stroke="none"/><circle cx="867.9" cy="499.3" r="3.10"/><circle cx="915.4" cy="475.7" r="3.34" fill="#020810" stroke="none"/><circle cx="915.4" cy="475.7" r="2.54"/><circle cx="962.8" cy="452.1" r="3.21" fill="#020810" stroke="none"/><circle cx="962.8" cy="452.1" r="2.41"/><circle cx="852.1" cy="499.2" r="3.62" fill="#020810" stroke="none"/><circle cx="852.1" cy="499.2" r="2.82"/><circle cx="899.5" cy="475.6" r="3.48" fill="#020810" stroke="none"/><circle cx="899.5" cy="475.6" r="2.68"/><circle cx="947.0" cy="451.9" r="4.15" fill="#020810" stroke="none"/><circle cx="947.0" cy="451.9" r="3.35"/><circle cx="836.2" cy="499.0" r="4.00" fill="#020810" stroke="none"/><circle cx="836.2" cy="499.0" r="3.20"/><circle cx="883.7" cy="475.4" r="3.82" fill="#020810" stroke="none"/><circle cx="883.7" cy="475.4" r="3.02"/><circle cx="931.2" cy="451.8" r="3.28" fill="#020810" stroke="none"/><circle cx="931.2" cy="451.8" r="2.48"/><circle cx="867.9" cy="475.2" r="3.28" fill="#020810" stroke="none"/><circle cx="867.9" cy="475.2" r="2.48"/><circle cx="915.4" cy="451.6" r="3.43" fill="#020810" stroke="none"/><circle cx="915.4" cy="451.6" r="2.63"/><circle cx="962.8" cy="427.9" r="3.36" fill="#020810" stroke="none"/><circle cx="962.8" cy="427.9" r="2.56"/><circle cx="852.0" cy="475.0" r="4.30" fill="#020810" stroke="none"/><circle cx="852.0" cy="475.0" r="3.50"/><circle cx="899.5" cy="451.4" r="3.68" fill="#020810" stroke="none"/><circle cx="899.5" cy="451.4" r="2.88"/><circle cx="947.0" cy="427.7" r="3.87" fill="#020810" stroke="none"/><circle cx="947.0" cy="427.7" r="3.07"/><circle cx="836.1" cy="474.9" r="4.56" fill="#020810" stroke="none"/><circle cx="836.1" cy="474.9" r="3.76"/><circle cx="883.7" cy="451.2" r="3.37" fill="#020810" stroke="none"/><circle cx="883.7" cy="451.2" r="2.57"/><circle cx="931.2" cy="427.6" r="3.71" fill="#020810" stroke="none"/><circle cx="931.2" cy="427.6" r="2.91"/><circle cx="867.8" cy="451.0" r="3.28" fill="#020810" stroke="none"/><circle cx="867.8" cy="451.0" r="2.48"/><circle cx="915.3" cy="427.4" r="4.11" fill="#020810" stroke="none"/><circle cx="915.3" cy="427.4" r="3.31"/><circle cx="962.9" cy="403.7" r="3.21" fill="#020810" stroke="none"/><circle cx="962.9" cy="403.7" r="2.41"/><circle cx="851.9" cy="450.8" r="4.21" fill="#020810" stroke="none"/><circle cx="851.9" cy="450.8" r="3.41"/><circle cx="899.5" cy="427.2" r="4.26" fill="#020810" stroke="none"/><circle cx="899.5" cy="427.2" r="3.46"/><circle cx="947.1" cy="403.5" r="4.21" fill="#020810" stroke="none"/><circle cx="947.1" cy="403.5" r="3.41"/><circle cx="836.0" cy="450.7" r="3.24" fill="#020810" stroke="none"/><circle cx="836.0" cy="450.7" r="2.44"/><circle cx="883.6" cy="427.0" r="3.38" fill="#020810" stroke="none"/><circle cx="883.6" cy="427.0" r="2.58"/><circle cx="931.2" cy="403.3" r="4.01" fill="#020810" stroke="none"/><circle cx="931.2" cy="403.3" r="3.21"/><circle cx="867.7" cy="426.8" r="3.25" fill="#020810" stroke="none"/><circle cx="867.7" cy="426.8" r="2.45"/><circle cx="915.3" cy="403.1" r="3.64" fill="#020810" stroke="none"/><circle cx="915.3" cy="403.1" r="2.84"/><circle cx="851.8" cy="426.6" r="3.62" fill="#020810" stroke="none"/><circle cx="851.8" cy="426.6" r="2.82"/><circle cx="899.5" cy="402.9" r="4.48" fill="#020810" stroke="none"/><circle cx="899.5" cy="402.9" r="3.68"/><circle cx="835.9" cy="426.4" r="3.80" fill="#020810" stroke="none"/><circle cx="835.9" cy="426.4" r="3.00"/><circle cx="883.6" cy="402.7" r="4.28" fill="#020810" stroke="none"/><circle cx="883.6" cy="402.7" r="3.48"/><circle cx="867.7" cy="402.5" r="3.42" fill="#020810" stroke="none"/><circle cx="867.7" cy="402.5" r="2.62"/><circle cx="851.7" cy="402.2" r="4.15" fill="#020810" stroke="none"/><circle cx="851.7" cy="402.2" r="3.35"/><circle cx="835.8" cy="402.0" r="3.56" fill="#020810" stroke="none"/><circle cx="835.8" cy="402.0" r="2.76"/><circle cx="966.2" cy="489.9" r="4.42" fill="#020810" stroke="none"/><circle cx="966.2" cy="489.9" r="3.62"/><circle cx="950.3" cy="489.8" r="3.26" fill="#020810" stroke="none"/><circle cx="950.3" cy="489.8" r="2.46"/><circle cx="934.3" cy="489.6" r="4.24" fill="#020810" stroke="none"/><circle cx="934.3" cy="489.6" r="3.44"/><circle cx="918.3" cy="489.4" r="3.34" fill="#020810" stroke="none"/><circle cx="918.3" cy="489.4" r="2.54"/><circle cx="966.3" cy="465.6" r="3.75" fill="#020810" stroke="none"/><circle cx="966.3" cy="465.6" r="2.95"/><circle cx="902.3" cy="489.3" r="3.72" fill="#020810" stroke="none"/><circle cx="902.3" cy="489.3" r="2.92"/><circle cx="950.3" cy="465.4" r="3.30" fill="#020810" stroke="none"/><circle cx="950.3" cy="465.4" r="2.50"/><circle cx="886.3" cy="489.1" r="4.26" fill="#020810" stroke="none"/><circle cx="886.3" cy="489.1" r="3.46"/><circle cx="934.3" cy="465.2" r="3.45" fill="#020810" stroke="none"/><circle cx="934.3" cy="465.2" r="2.65"/><circle cx="870.3" cy="488.9" r="3.45" fill="#020810" stroke="none"/><circle cx="870.3" cy="488.9" r="2.65"/><circle cx="918.3" cy="465.0" r="3.26" fill="#020810" stroke="none"/><circle cx="918.3" cy="465.0" r="2.46"/><circle cx="966.4" cy="441.1" r="3.44" fill="#020810" stroke="none"/><circle cx="966.4" cy="441.1" r="2.64"/><circle cx="854.3" cy="488.8" r="3.64" fill="#020810" stroke="none"/><circle cx="854.3" cy="488.8" r="2.84"/><circle cx="902.3" cy="464.9" r="4.04" fill="#020810" stroke="none"/><circle cx="902.3" cy="464.9" r="3.24"/><circle cx="950.4" cy="440.9" r="3.50" fill="#020810" stroke="none"/><circle cx="950.4" cy="440.9" r="2.70"/><circle cx="838.2" cy="488.6" r="3.99" fill="#020810" stroke="none"/><circle cx="838.2" cy="488.6" r="3.19"/><circle cx="886.3" cy="464.7" r="3.27" fill="#020810" stroke="none"/><circle cx="886.3" cy="464.7" r="2.47"/><circle cx="934.3" cy="440.8" r="3.55" fill="#020810" stroke="none"/><circle cx="934.3" cy="440.8" r="2.75"/><circle cx="870.2" cy="464.5" r="3.64" fill="#020810" stroke="none"/><circle cx="870.2" cy="464.5" r="2.84"/><circle cx="918.3" cy="440.6" r="4.54" fill="#020810" stroke="none"/><circle cx="918.3" cy="440.6" r="3.74"/><circle cx="966.4" cy="416.6" r="4.26" fill="#020810" stroke="none"/><circle cx="966.4" cy="416.6" r="3.46"/><circle cx="854.2" cy="464.3" r="3.94" fill="#020810" stroke="none"/><circle cx="854.2" cy="464.3" r="3.14"/><circle cx="902.3" cy="440.4" r="3.24" fill="#020810" stroke="none"/><circle cx="902.3" cy="440.4" r="2.44"/><circle cx="950.4" cy="416.4" r="3.53" fill="#020810" stroke="none"/><circle cx="950.4" cy="416.4" r="2.73"/><circle cx="838.1" cy="464.1" r="4.04" fill="#020810" stroke="none"/><circle cx="838.1" cy="464.1" r="3.24"/><circle cx="886.2" cy="440.2" r="3.38" fill="#020810" stroke="none"/><circle cx="886.2" cy="440.2" r="2.58"/><circle cx="934.4" cy="416.2" r="3.79" fill="#020810" stroke="none"/><circle cx="934.4" cy="416.2" r="2.99"/><circle cx="870.2" cy="440.0" r="3.64" fill="#020810" stroke="none"/><circle cx="870.2" cy="440.0" r="2.84"/><circle cx="918.3" cy="416.0" r="3.24" fill="#020810" stroke="none"/><circle cx="918.3" cy="416.0" r="2.44"/><circle cx="854.1" cy="439.8" r="4.60" fill="#020810" stroke="none"/><circle cx="854.1" cy="439.8" r="3.80"/><circle cx="902.3" cy="415.8" r="4.21" fill="#020810" stroke="none"/><circle cx="902.3" cy="415.8" r="3.41"/><circle cx="838.0" cy="439.6" r="3.35" fill="#020810" stroke="none"/><circle cx="838.0" cy="439.6" r="2.55"/><circle cx="886.2" cy="415.6" r="3.88" fill="#020810" stroke="none"/><circle cx="886.2" cy="415.6" r="3.08"/><circle cx="870.1" cy="415.4" r="3.44" fill="#020810" stroke="none"/><circle cx="870.1" cy="415.4" r="2.64"/><circle cx="854.0" cy="415.2" r="3.54" fill="#020810" stroke="none"/><circle cx="854.0" cy="415.2" r="2.74"/><circle cx="837.9" cy="415.0" r="3.76" fill="#020810" stroke="none"/><circle cx="837.9" cy="415.0" r="2.96"/><circle cx="969.9" cy="479.3" r="3.46" fill="#020810" stroke="none"/><circle cx="969.9" cy="479.3" r="2.66"/><circle cx="953.7" cy="479.2" r="3.50" fill="#020810" stroke="none"/><circle cx="953.7" cy="479.2" r="2.70"/><circle cx="937.5" cy="479.0" r="3.57" fill="#020810" stroke="none"/><circle cx="937.5" cy="479.0" r="2.77"/><circle cx="921.4" cy="478.8" r="3.99" fill="#020810" stroke="none"/><circle cx="921.4" cy="478.8" r="3.19"/><circle cx="969.9" cy="454.6" r="3.42" fill="#020810" stroke="none"/><circle cx="969.9" cy="454.6" r="2.62"/><circle cx="905.2" cy="478.6" r="3.37" fill="#020810" stroke="none"/><circle cx="905.2" cy="478.6" r="2.57"/><circle cx="953.8" cy="454.4" r="4.11" fill="#020810" stroke="none"/><circle cx="953.8" cy="454.4" r="3.31"/><circle cx="888.9" cy="478.5" r="3.50" fill="#020810" stroke="none"/><circle cx="888.9" cy="478.5" r="2.70"/><circle cx="937.6" cy="454.3" r="4.54" fill="#020810" stroke="none"/><circle cx="937.6" cy="454.3" r="3.74"/><circle cx="872.7" cy="478.3" r="3.82" fill="#020810" stroke="none"/><circle cx="872.7" cy="478.3" r="3.02"/><circle cx="921.4" cy="454.1" r="4.10" fill="#020810" stroke="none"/><circle cx="921.4" cy="454.1" r="3.30"/><circle cx="970.0" cy="429.9" r="3.50" fill="#020810" stroke="none"/><circle cx="970.0" cy="429.9" r="2.70"/><circle cx="856.5" cy="478.1" r="4.30" fill="#020810" stroke="none"/><circle cx="856.5" cy="478.1" r="3.50"/><circle cx="905.1" cy="453.9" r="3.30" fill="#020810" stroke="none"/><circle cx="905.1" cy="453.9" r="2.50"/><circle cx="953.8" cy="429.7" r="3.33" fill="#020810" stroke="none"/><circle cx="953.8" cy="429.7" r="2.53"/><circle cx="840.2" cy="477.9" r="3.30" fill="#020810" stroke="none"/><circle cx="840.2" cy="477.9" r="2.50"/><circle cx="888.9" cy="453.7" r="4.02" fill="#020810" stroke="none"/><circle cx="888.9" cy="453.7" r="3.22"/><circle cx="937.6" cy="429.5" r="4.07" fill="#020810" stroke="none"/><circle cx="937.6" cy="429.5" r="3.27"/><circle cx="872.7" cy="453.5" r="3.36" fill="#020810" stroke="none"/><circle cx="872.7" cy="453.5" r="2.56"/><circle cx="921.4" cy="429.3" r="3.59" fill="#020810" stroke="none"/><circle cx="921.4" cy="429.3" r="2.79"/><circle cx="856.4" cy="453.3" r="4.32" fill="#020810" stroke="none"/><circle cx="856.4" cy="453.3" r="3.52"/><circle cx="905.1" cy="429.1" r="3.88" fill="#020810" stroke="none"/><circle cx="905.1" cy="429.1" r="3.08"/><circle cx="840.1" cy="453.1" r="3.30" fill="#020810" stroke="none"/><circle cx="840.1" cy="453.1" r="2.50"/><circle cx="888.9" cy="428.9" r="3.40" fill="#020810" stroke="none"/><circle cx="888.9" cy="428.9" r="2.60"/><circle cx="872.6" cy="428.7" r="3.35" fill="#020810" stroke="none"/><circle cx="872.6" cy="428.7" r="2.55"/><circle cx="856.3" cy="428.5" r="3.32" fill="#020810" stroke="none"/><circle cx="856.3" cy="428.5" r="2.52"/><circle cx="840.0" cy="428.3" r="3.61" fill="#020810" stroke="none"/><circle cx="840.0" cy="428.3" r="2.81"/><circle cx="973.6" cy="468.4" r="3.31" fill="#020810" stroke="none"/><circle cx="973.6" cy="468.4" r="2.51"/><circle cx="957.2" cy="468.3" r="4.53" fill="#020810" stroke="none"/><circle cx="957.2" cy="468.3" r="3.73"/><circle cx="940.9" cy="468.1" r="3.65" fill="#020810" stroke="none"/><circle cx="940.9" cy="468.1" r="2.85"/><circle cx="924.5" cy="467.9" r="3.78" fill="#020810" stroke="none"/><circle cx="924.5" cy="467.9" r="2.98"/><circle cx="973.7" cy="443.4" r="4.00" fill="#020810" stroke="none"/><circle cx="973.7" cy="443.4" r="3.20"/><circle cx="908.1" cy="467.7" r="4.22" fill="#020810" stroke="none"/><circle cx="908.1" cy="467.7" r="3.42"/><circle cx="957.3" cy="443.2" r="4.32" fill="#020810" stroke="none"/><circle cx="957.3" cy="443.2" r="3.52"/><circle cx="891.6" cy="467.5" r="3.60" fill="#020810" stroke="none"/><circle cx="891.6" cy="467.5" r="2.80"/><circle cx="940.9" cy="443.0" r="3.54" fill="#020810" stroke="none"/><circle cx="940.9" cy="443.0" r="2.74"/><circle cx="875.2" cy="467.3" r="3.64" fill="#020810" stroke="none"/><circle cx="875.2" cy="467.3" r="2.84"/><circle cx="924.5" cy="442.8" r="3.30" fill="#020810" stroke="none"/><circle cx="924.5" cy="442.8" r="2.50"/><circle cx="858.8" cy="467.2" r="3.63" fill="#020810" stroke="none"/><circle cx="858.8" cy="467.2" r="2.83"/><circle cx="908.1" cy="442.6" r="4.10" fill="#020810" stroke="none"/><circle cx="908.1" cy="442.6" r="3.30"/><circle cx="842.3" cy="467.0" r="4.67" fill="#020810" stroke="none"/><circle cx="842.3" cy="467.0" r="3.87"/><circle cx="891.6" cy="442.4" r="4.27" fill="#020810" stroke="none"/><circle cx="891.6" cy="442.4" r="3.47"/><circle cx="875.2" cy="442.2" r="4.03" fill="#020810" stroke="none"/><circle cx="875.2" cy="442.2" r="3.23"/><circle cx="858.7" cy="442.0" r="3.94" fill="#020810" stroke="none"/><circle cx="858.7" cy="442.0" r="3.14"/><circle cx="842.2" cy="441.8" r="3.31" fill="#020810" stroke="none"/><circle cx="842.2" cy="441.8" r="2.51"/><circle cx="977.4" cy="457.3" r="3.57" fill="#020810" stroke="none"/><circle cx="977.4" cy="457.3" r="2.77"/><circle cx="960.9" cy="457.1" r="3.58" fill="#020810" stroke="none"/><circle cx="960.9" cy="457.1" r="2.78"/><circle cx="944.3" cy="456.9" r="4.04" fill="#020810" stroke="none"/><circle cx="944.3" cy="456.9" r="3.24"/><circle cx="927.7" cy="456.7" r="3.37" fill="#020810" stroke="none"/><circle cx="927.7" cy="456.7" r="2.57"/><circle cx="911.1" cy="456.5" r="3.63" fill="#020810" stroke="none"/><circle cx="911.1" cy="456.5" r="2.83"/><circle cx="894.4" cy="456.3" r="3.82" fill="#020810" stroke="none"/><circle cx="894.4" cy="456.3" r="3.02"/><circle cx="877.8" cy="456.1" r="4.31" fill="#020810" stroke="none"/><circle cx="877.8" cy="456.1" r="3.51"/><circle cx="861.1" cy="455.9" r="4.38" fill="#020810" stroke="none"/><circle cx="861.1" cy="455.9" r="3.58"/><circle cx="844.4" cy="455.7" r="3.98" fill="#020810" stroke="none"/><circle cx="844.4" cy="455.7" r="3.18"/></g>
<circle cx="890.4" cy="441" r="9.6" fill="#b8dae2" fill-opacity="0.45" stroke="#10e4f4" stroke-opacity="0.7" stroke-width="1.6"/>
<circle cx="872.4" cy="480.1" r="14" fill="#06126a"/><circle cx="872.4" cy="480.1" r="12.8" fill="#00ecff"/><circle cx="872.4" cy="480.1" r="10.4" fill="#b8dae2"/><circle cx="872.4" cy="470.5" r="3.2" fill="#b8dae2" stroke="#10e4f4" stroke-width="1"/>
</svg>
<div class="a" style="left:1145px;top:3px;width:133px;height:27px;background:#a4dbe6;border:1px solid #b8e8f0;border-radius:13.5px"></div>
<div class="a" style="left:1161px;top:10px;font-size:14.6px;line-height:14px;color:#000">Officer 761/761</div>
<div class="a" style="left:1288px;top:7.5px;width:18px;height:18px;background:#a4dbe6;border-radius:50%"></div>
<div class="a" style="left:1150.5px;top:39.5px;width:127px;height:26px;background:#d72a2a;border:1px solid #e04040;border-radius:13px"></div>
<div class="a" style="left:1166px;top:46px;font-size:14.6px;line-height:14px;color:#000">Crime 289/289</div>
<div class="a" style="left:1288px;top:43.5px;width:18px;height:18px;background:#d72a2a;border-radius:50%"></div>
<div class="a" style="left:1082.5px;top:118.5px;width:195.5px;height:26px;border:1.8px solid #64a6de;border-radius:13px"></div>
<div class="a" style="left:1099px;top:125px;font-size:13.6px;line-height:14px;color:#8ccaf4">INVESTIGATED_BY 0/289</div>
<div class="a" style="left:1288px;top:127.5px;width:18px;height:5px;background:#8ccaf4"></div>
<svg class="a" style="left:1230px;top:448px" width="76" height="78" viewBox="1230 448 76 78"><path d="M1268.3 451 L1276.1 459.9 H1271.9 V469.7 H1264.7 V459.9 H1260.5 Z" fill="#c8c8c8"/><path d="M1268.3 522.6 L1276.1 513.6 H1271.9 V503.8 H1264.7 V513.6 H1260.5 Z" fill="#c8c8c8"/><path d="M1234.8 484.3 L1243.8 476.5 V480.7 H1253.6 V487.9 H1243.8 V492.1 Z" fill="#c8c8c8"/><path d="M1302 484.3 L1293 476.5 V480.7 H1283.2 V487.9 H1293 V492.1 Z" fill="#c8c8c8"/><circle cx="1268.3" cy="484.3" r="6.8" stroke="#c8c8c8" stroke-width="1.1" fill="none"/></svg>
<div class="a" style="left:1033px;top:531px;width:280px;height:46px;background:#0e0e0e;border:1px solid #5a5a5a;border-radius:4px"></div>
<svg class="a" style="left:1043px;top:548.5px" width="12" height="12" viewBox="0 0 12 12"><path d="M2 1.5 L6 4.8 L10 1.5 M2 5.6 L6 8.9 L10 5.6" stroke="#e8e8e8" stroke-width="1.4" fill="none"/></svg>
<div class="a" style="left:1058px;top:547px;font-size:15.2px;line-height:16px;color:#f0f0f0">Snapshots</div>
<svg class="a" style="left:1172px;top:543px" width="22" height="22" viewBox="0 0 22 22"><path d="M11 0.5 L15 5 H12.3 V9.7 H17 V7 L21.5 11 L17 15 V12.3 H12.3 V17 H15 L11 21.5 L7 17 H9.7 V12.3 H5 V15 L0.5 11 L5 7 V9.7 H9.7 V5 H7 Z" fill="#c8c8c8"/></svg>
<svg class="a" style="left:1209px;top:543px" width="20" height="20" viewBox="0 0 20 20"><path d="M7.5 0.5 H12.5 V7.5 H16.5 L10 14 L3.5 7.5 H7.5 Z" fill="#c8c8c8"/><path d="M0.5 13 H6 L10 16.5 L14 13 H19.5 V19.5 H0.5 Z" fill="#c8c8c8"/></svg>
<svg class="a" style="left:1225px;top:538px" width="30" height="32" viewBox="1225 538 30 32"><path d="M1244.5 544.5 V551" stroke="#555" stroke-width="3" stroke-linecap="round"/><ellipse cx="1243" cy="554.4" rx="8.5" ry="4.6" stroke="#555" stroke-width="2.6" fill="none"/><path d="M1241 556.5 L1246 559.5 L1241 561 Z" fill="#555"/><circle cx="1244.5" cy="565.5" r="1.9" fill="#555"/></svg>
<svg class="a" style="left:1244px;top:543px" width="21" height="21" viewBox="0 0 21 21"><circle cx="10.5" cy="10.5" r="9.5" fill="#d8d8d8" stroke="#888" stroke-width="1"/><path d="M10.5 5.5 V15.5 M5.5 10.5 H15.5" stroke="#222" stroke-width="2.4"/></svg>
<svg class="a" style="left:1278px;top:541px" width="28" height="26" viewBox="0 0 28 26"><ellipse cx="14" cy="13" rx="13" ry="6" fill="#555"/><circle cx="14" cy="24" r="1.5" fill="#555"/></svg>
<svg class="a" style="left:1281px;top:543px" width="21" height="21" viewBox="0 0 21 21"><circle cx="10.5" cy="10.5" r="9.5" fill="#d8d8d8"/><path d="M7 7 L14 14 M14 7 L7 14" stroke="#222" stroke-width="2.4"/></svg>
</body></html>
